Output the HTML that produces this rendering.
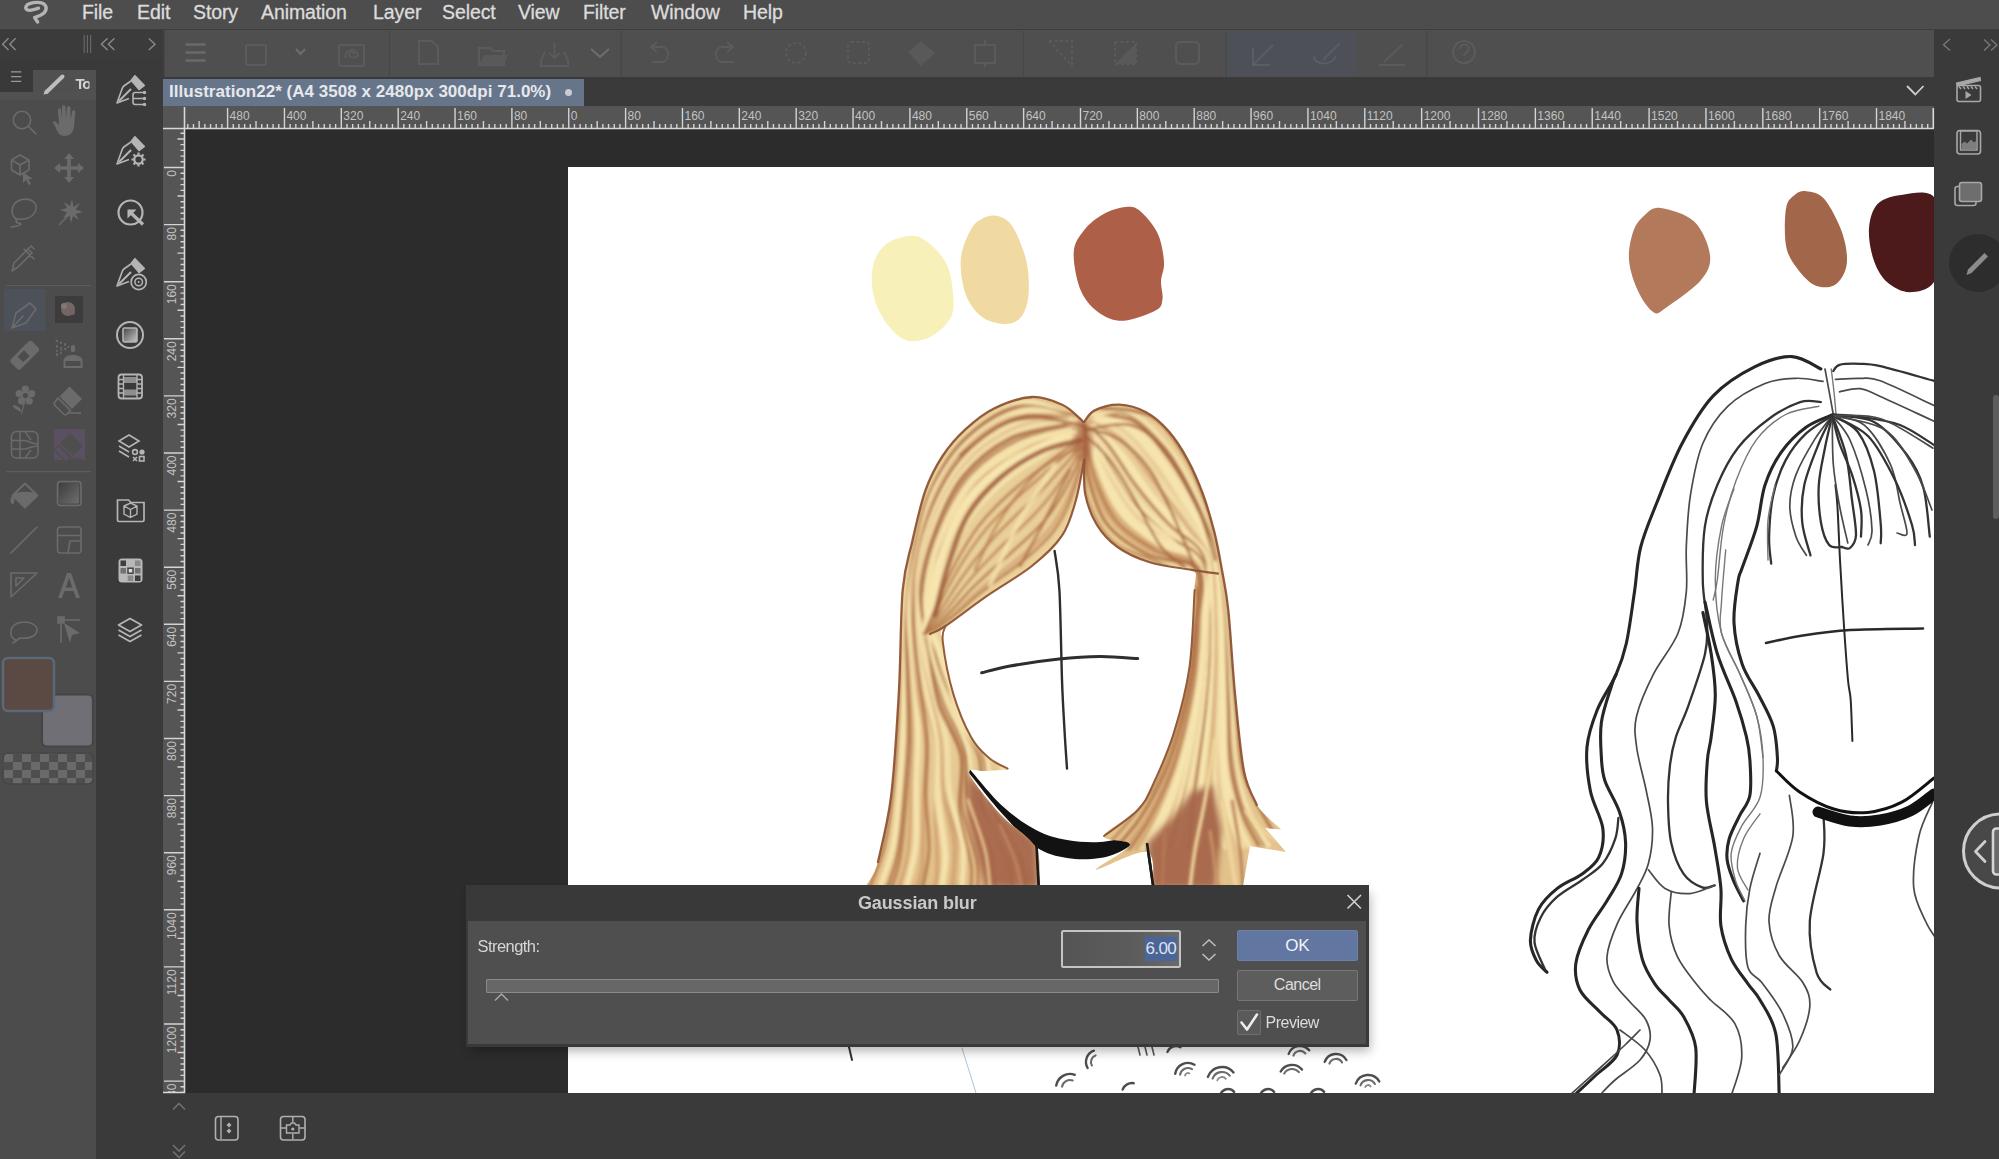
<!DOCTYPE html>
<html><head><meta charset="utf-8">
<style>
*{margin:0;padding:0;box-sizing:border-box}
html,body{width:1999px;height:1159px;overflow:hidden;background:#2c2c2c;font-family:"Liberation Sans",sans-serif}
.a{position:absolute}
svg{position:absolute;left:0;top:0}
#menu span{position:absolute;top:1px;letter-spacing:-0.1px;color:#dcdcdc;font-size:19.5px;-webkit-text-stroke:0.3px #dcdcdc}
</style></head><body>
<div class="a" style="left:0;top:0;width:1999px;height:29px;background:#4d4d4d"></div>
<div class="a" style="left:0;top:29px;width:1999px;height:1px;background:#3e3e3e"></div>
<div id="menu">
<span style="left:82px">File</span>
<span style="left:137px">Edit</span>
<span style="left:193px">Story</span>
<span style="left:261px">Animation</span>
<span style="left:373px">Layer</span>
<span style="left:442px">Select</span>
<span style="left:518px">View</span>
<span style="left:583px">Filter</span>
<span style="left:651px">Window</span>
<span style="left:743px">Help</span>
</div>
<!-- left header -->
<div class="a" style="left:0;top:30px;width:163px;height:30px;background:#3b3b3b"></div>
<!-- tool panel -->
<div class="a" style="left:0;top:60px;width:96px;height:1099px;background:#4c4c4c"></div>
<div class="a" style="left:0;top:60px;width:96px;height:10px;background:#393939"></div>
<div class="a" style="left:0;top:70px;width:33px;height:22px;background:#393939"></div>
<div class="a" style="left:33px;top:70px;width:63px;height:22px;background:#505050"></div>
<div class="a" style="left:0;top:92px;width:96px;height:8px;background:#515151"></div>
<!-- subtool column -->
<div class="a" style="left:96px;top:60px;width:67px;height:1099px;background:#3a3a3a"></div>
<!-- toolbar -->
<div class="a" style="left:163px;top:30px;width:1771px;height:47px;background:#4f4f4f"></div>
<div class="a" style="left:1226px;top:31px;width:131px;height:45px;background:#4d5056"></div>
<!-- tab row -->
<div class="a" style="left:163px;top:77px;width:1771px;height:29px;background:#3a3a3a"></div>
<div class="a" style="left:163px;top:79px;width:421px;height:27px;background:#66758a"></div>
<div class="a" style="left:169px;top:81.5px;color:#e6e8ec;font-size:17px;font-weight:bold;white-space:nowrap;letter-spacing:0.03px">Illustration22* (A4 3508 x 2480px 300dpi 71.0%)</div>
<div class="a" style="left:565px;top:89px;width:7px;height:7px;border-radius:50%;background:#c8ccd4"></div>
<!-- rulers bg -->
<div class="a" style="left:163px;top:106px;width:1771px;height:22px;background:#555"></div>
<div class="a" style="left:163px;top:128px;width:22px;height:965px;background:#555"></div>
<!-- canvas paper -->
<div class="a" style="left:568px;top:167px;width:1366px;height:926px;background:#fff"></div>
<!-- bottom bar -->
<div class="a" style="left:163px;top:1093px;width:1771px;height:66px;background:#3a3a3a"></div>
<!-- right panel -->
<div class="a" style="left:1934px;top:30px;width:65px;height:1129px;background:#3a3a3a"></div>

<svg width="1999" height="1159">
<defs><clipPath id="vrc"><rect x="163" y="129" width="23" height="964"/></clipPath><clipPath id="hrc"><rect x="185" y="106" width="1749" height="23"/></clipPath></defs>
<g font-size="12" fill="#c2c2c2" clip-path="url(#hrc)"><path stroke="#d4d4d4" stroke-width="1.4" fill="none" d="M187.79 124V128 M193.47 124V128 M199.16 121V128 M204.85 124V128 M210.53 124V128 M216.22 124V128 M221.90 124V128 M227.59 108V128 M233.28 124V128 M238.96 124V128 M244.65 124V128 M250.33 124V128 M256.02 121V128 M261.71 124V128 M267.39 124V128 M273.08 124V128 M278.76 124V128 M284.45 108V128 M290.14 124V128 M295.82 124V128 M301.51 124V128 M307.19 124V128 M312.88 121V128 M318.57 124V128 M324.25 124V128 M329.94 124V128 M335.62 124V128 M341.31 108V128 M347.00 124V128 M352.68 124V128 M358.37 124V128 M364.05 124V128 M369.74 121V128 M375.43 124V128 M381.11 124V128 M386.80 124V128 M392.48 124V128 M398.17 108V128 M403.86 124V128 M409.54 124V128 M415.23 124V128 M420.91 124V128 M426.60 121V128 M432.29 124V128 M437.97 124V128 M443.66 124V128 M449.34 124V128 M455.03 108V128 M460.72 124V128 M466.40 124V128 M472.09 124V128 M477.77 124V128 M483.46 121V128 M489.15 124V128 M494.83 124V128 M500.52 124V128 M506.20 124V128 M511.89 108V128 M517.58 124V128 M523.26 124V128 M528.95 124V128 M534.63 124V128 M540.32 121V128 M546.01 124V128 M551.69 124V128 M557.38 124V128 M563.06 124V128 M568.75 108V128 M574.44 124V128 M580.12 124V128 M585.81 124V128 M591.49 124V128 M597.18 121V128 M602.87 124V128 M608.55 124V128 M614.24 124V128 M619.92 124V128 M625.61 108V128 M631.30 124V128 M636.98 124V128 M642.67 124V128 M648.35 124V128 M654.04 121V128 M659.73 124V128 M665.41 124V128 M671.10 124V128 M676.78 124V128 M682.47 108V128 M688.16 124V128 M693.84 124V128 M699.53 124V128 M705.21 124V128 M710.90 121V128 M716.59 124V128 M722.27 124V128 M727.96 124V128 M733.64 124V128 M739.33 108V128 M745.02 124V128 M750.70 124V128 M756.39 124V128 M762.07 124V128 M767.76 121V128 M773.45 124V128 M779.13 124V128 M784.82 124V128 M790.50 124V128 M796.19 108V128 M801.88 124V128 M807.56 124V128 M813.25 124V128 M818.93 124V128 M824.62 121V128 M830.31 124V128 M835.99 124V128 M841.68 124V128 M847.36 124V128 M853.05 108V128 M858.74 124V128 M864.42 124V128 M870.11 124V128 M875.79 124V128 M881.48 121V128 M887.17 124V128 M892.85 124V128 M898.54 124V128 M904.22 124V128 M909.91 108V128 M915.60 124V128 M921.28 124V128 M926.97 124V128 M932.65 124V128 M938.34 121V128 M944.03 124V128 M949.71 124V128 M955.40 124V128 M961.08 124V128 M966.77 108V128 M972.46 124V128 M978.14 124V128 M983.83 124V128 M989.51 124V128 M995.20 121V128 M1000.89 124V128 M1006.57 124V128 M1012.26 124V128 M1017.94 124V128 M1023.63 108V128 M1029.32 124V128 M1035.00 124V128 M1040.69 124V128 M1046.37 124V128 M1052.06 121V128 M1057.75 124V128 M1063.43 124V128 M1069.12 124V128 M1074.80 124V128 M1080.49 108V128 M1086.18 124V128 M1091.86 124V128 M1097.55 124V128 M1103.23 124V128 M1108.92 121V128 M1114.61 124V128 M1120.29 124V128 M1125.98 124V128 M1131.66 124V128 M1137.35 108V128 M1143.04 124V128 M1148.72 124V128 M1154.41 124V128 M1160.09 124V128 M1165.78 121V128 M1171.47 124V128 M1177.15 124V128 M1182.84 124V128 M1188.52 124V128 M1194.21 108V128 M1199.90 124V128 M1205.58 124V128 M1211.27 124V128 M1216.95 124V128 M1222.64 121V128 M1228.33 124V128 M1234.01 124V128 M1239.70 124V128 M1245.38 124V128 M1251.07 108V128 M1256.76 124V128 M1262.44 124V128 M1268.13 124V128 M1273.81 124V128 M1279.50 121V128 M1285.19 124V128 M1290.87 124V128 M1296.56 124V128 M1302.24 124V128 M1307.93 108V128 M1313.62 124V128 M1319.30 124V128 M1324.99 124V128 M1330.67 124V128 M1336.36 121V128 M1342.05 124V128 M1347.73 124V128 M1353.42 124V128 M1359.10 124V128 M1364.79 108V128 M1370.48 124V128 M1376.16 124V128 M1381.85 124V128 M1387.53 124V128 M1393.22 121V128 M1398.91 124V128 M1404.59 124V128 M1410.28 124V128 M1415.96 124V128 M1421.65 108V128 M1427.34 124V128 M1433.02 124V128 M1438.71 124V128 M1444.39 124V128 M1450.08 121V128 M1455.77 124V128 M1461.45 124V128 M1467.14 124V128 M1472.82 124V128 M1478.51 108V128 M1484.20 124V128 M1489.88 124V128 M1495.57 124V128 M1501.25 124V128 M1506.94 121V128 M1512.63 124V128 M1518.31 124V128 M1524.00 124V128 M1529.68 124V128 M1535.37 108V128 M1541.06 124V128 M1546.74 124V128 M1552.43 124V128 M1558.11 124V128 M1563.80 121V128 M1569.49 124V128 M1575.17 124V128 M1580.86 124V128 M1586.54 124V128 M1592.23 108V128 M1597.92 124V128 M1603.60 124V128 M1609.29 124V128 M1614.97 124V128 M1620.66 121V128 M1626.35 124V128 M1632.03 124V128 M1637.72 124V128 M1643.40 124V128 M1649.09 108V128 M1654.78 124V128 M1660.46 124V128 M1666.15 124V128 M1671.83 124V128 M1677.52 121V128 M1683.21 124V128 M1688.89 124V128 M1694.58 124V128 M1700.26 124V128 M1705.95 108V128 M1711.64 124V128 M1717.32 124V128 M1723.01 124V128 M1728.69 124V128 M1734.38 121V128 M1740.07 124V128 M1745.75 124V128 M1751.44 124V128 M1757.12 124V128 M1762.81 108V128 M1768.50 124V128 M1774.18 124V128 M1779.87 124V128 M1785.55 124V128 M1791.24 121V128 M1796.93 124V128 M1802.61 124V128 M1808.30 124V128 M1813.98 124V128 M1819.67 108V128 M1825.36 124V128 M1831.04 124V128 M1836.73 124V128 M1842.41 124V128 M1848.10 121V128 M1853.79 124V128 M1859.47 124V128 M1865.16 124V128 M1870.84 124V128 M1876.53 108V128 M1882.22 124V128 M1887.90 124V128 M1893.59 124V128 M1899.27 124V128 M1904.96 121V128 M1910.65 124V128 M1916.33 124V128 M1922.02 124V128 M1927.70 124V128"/>
<text x="229.59" y="119.8">480</text>
<text x="286.45" y="119.8">400</text>
<text x="343.31" y="119.8">320</text>
<text x="400.17" y="119.8">240</text>
<text x="457.03" y="119.8">160</text>
<text x="513.89" y="119.8">80</text>
<text x="570.75" y="119.8">0</text>
<text x="627.61" y="119.8">80</text>
<text x="684.47" y="119.8">160</text>
<text x="741.33" y="119.8">240</text>
<text x="798.19" y="119.8">320</text>
<text x="855.05" y="119.8">400</text>
<text x="911.91" y="119.8">480</text>
<text x="968.77" y="119.8">560</text>
<text x="1025.63" y="119.8">640</text>
<text x="1082.49" y="119.8">720</text>
<text x="1139.35" y="119.8">800</text>
<text x="1196.21" y="119.8">880</text>
<text x="1253.07" y="119.8">960</text>
<text x="1309.93" y="119.8">1040</text>
<text x="1366.79" y="119.8">1120</text>
<text x="1423.65" y="119.8">1200</text>
<text x="1480.51" y="119.8">1280</text>
<text x="1537.37" y="119.8">1360</text>
<text x="1594.23" y="119.8">1440</text>
<text x="1651.09" y="119.8">1520</text>
<text x="1707.95" y="119.8">1600</text>
<text x="1764.81" y="119.8">1680</text>
<text x="1821.67" y="119.8">1760</text>
<text x="1878.53" y="119.8">1840</text></g>
<g font-size="12" fill="#c2c2c2" clip-path="url(#vrc)"><path stroke="#d4d4d4" stroke-width="1.4" fill="none" d="M180.5 133.24H185 M177.5 138.95H185 M180.5 144.66H185 M180.5 150.37H185 M180.5 156.08H185 M180.5 161.79H185 M164 167.50H185 M180.5 173.21H185 M180.5 178.92H185 M180.5 184.63H185 M180.5 190.34H185 M177.5 196.05H185 M180.5 201.76H185 M180.5 207.47H185 M180.5 213.18H185 M180.5 218.89H185 M164 224.60H185 M180.5 230.31H185 M180.5 236.02H185 M180.5 241.73H185 M180.5 247.44H185 M177.5 253.15H185 M180.5 258.86H185 M180.5 264.57H185 M180.5 270.28H185 M180.5 275.99H185 M164 281.70H185 M180.5 287.41H185 M180.5 293.12H185 M180.5 298.83H185 M180.5 304.54H185 M177.5 310.25H185 M180.5 315.96H185 M180.5 321.67H185 M180.5 327.38H185 M180.5 333.09H185 M164 338.80H185 M180.5 344.51H185 M180.5 350.22H185 M180.5 355.93H185 M180.5 361.64H185 M177.5 367.35H185 M180.5 373.06H185 M180.5 378.77H185 M180.5 384.48H185 M180.5 390.19H185 M164 395.90H185 M180.5 401.61H185 M180.5 407.32H185 M180.5 413.03H185 M180.5 418.74H185 M177.5 424.45H185 M180.5 430.16H185 M180.5 435.87H185 M180.5 441.58H185 M180.5 447.29H185 M164 453.00H185 M180.5 458.71H185 M180.5 464.42H185 M180.5 470.13H185 M180.5 475.84H185 M177.5 481.55H185 M180.5 487.26H185 M180.5 492.97H185 M180.5 498.68H185 M180.5 504.39H185 M164 510.10H185 M180.5 515.81H185 M180.5 521.52H185 M180.5 527.23H185 M180.5 532.94H185 M177.5 538.65H185 M180.5 544.36H185 M180.5 550.07H185 M180.5 555.78H185 M180.5 561.49H185 M164 567.20H185 M180.5 572.91H185 M180.5 578.62H185 M180.5 584.33H185 M180.5 590.04H185 M177.5 595.75H185 M180.5 601.46H185 M180.5 607.17H185 M180.5 612.88H185 M180.5 618.59H185 M164 624.30H185 M180.5 630.01H185 M180.5 635.72H185 M180.5 641.43H185 M180.5 647.14H185 M177.5 652.85H185 M180.5 658.56H185 M180.5 664.27H185 M180.5 669.98H185 M180.5 675.69H185 M164 681.40H185 M180.5 687.11H185 M180.5 692.82H185 M180.5 698.53H185 M180.5 704.24H185 M177.5 709.95H185 M180.5 715.66H185 M180.5 721.37H185 M180.5 727.08H185 M180.5 732.79H185 M164 738.50H185 M180.5 744.21H185 M180.5 749.92H185 M180.5 755.63H185 M180.5 761.34H185 M177.5 767.05H185 M180.5 772.76H185 M180.5 778.47H185 M180.5 784.18H185 M180.5 789.89H185 M164 795.60H185 M180.5 801.31H185 M180.5 807.02H185 M180.5 812.73H185 M180.5 818.44H185 M177.5 824.15H185 M180.5 829.86H185 M180.5 835.57H185 M180.5 841.28H185 M180.5 846.99H185 M164 852.70H185 M180.5 858.41H185 M180.5 864.12H185 M180.5 869.83H185 M180.5 875.54H185 M177.5 881.25H185 M180.5 886.96H185 M180.5 892.67H185 M180.5 898.38H185 M180.5 904.09H185 M164 909.80H185 M180.5 915.51H185 M180.5 921.22H185 M180.5 926.93H185 M180.5 932.64H185 M177.5 938.35H185 M180.5 944.06H185 M180.5 949.77H185 M180.5 955.48H185 M180.5 961.19H185 M164 966.90H185 M180.5 972.61H185 M180.5 978.32H185 M180.5 984.03H185 M180.5 989.74H185 M177.5 995.45H185 M180.5 1001.16H185 M180.5 1006.87H185 M180.5 1012.58H185 M180.5 1018.29H185 M164 1024.00H185 M180.5 1029.71H185 M180.5 1035.42H185 M180.5 1041.13H185 M180.5 1046.84H185 M177.5 1052.55H185 M180.5 1058.26H185 M180.5 1063.97H185 M180.5 1069.68H185 M180.5 1075.39H185 M164 1081.10H185 M180.5 1086.81H185 M180.5 1092.52H185"/>
<text transform="translate(176 170.00) rotate(-90)" text-anchor="end">0</text>
<text transform="translate(176 227.10) rotate(-90)" text-anchor="end">80</text>
<text transform="translate(176 284.20) rotate(-90)" text-anchor="end">160</text>
<text transform="translate(176 341.30) rotate(-90)" text-anchor="end">240</text>
<text transform="translate(176 398.40) rotate(-90)" text-anchor="end">320</text>
<text transform="translate(176 455.50) rotate(-90)" text-anchor="end">400</text>
<text transform="translate(176 512.60) rotate(-90)" text-anchor="end">480</text>
<text transform="translate(176 569.70) rotate(-90)" text-anchor="end">560</text>
<text transform="translate(176 626.80) rotate(-90)" text-anchor="end">640</text>
<text transform="translate(176 683.90) rotate(-90)" text-anchor="end">720</text>
<text transform="translate(176 741.00) rotate(-90)" text-anchor="end">800</text>
<text transform="translate(176 798.10) rotate(-90)" text-anchor="end">880</text>
<text transform="translate(176 855.20) rotate(-90)" text-anchor="end">960</text>
<text transform="translate(176 912.30) rotate(-90)" text-anchor="end">1040</text>
<text transform="translate(176 969.40) rotate(-90)" text-anchor="end">1120</text>
<text transform="translate(176 1026.50) rotate(-90)" text-anchor="end">1200</text>
<text transform="translate(176 1083.60) rotate(-90)" text-anchor="end">1280</text></g>
<path d="M163 128.5H1934 M184.5 107V1093 M1933.3 108V128 M163 1092.5H185" stroke="#d8d8d8" stroke-width="1.6"/>
</svg>
<svg width="1999" height="1159" style="z-index:2"><svg x="568" y="167" width="1366" height="926" viewBox="568 167 1366 926" overflow="hidden"><path d="M911.2 235.8 C918.4 235.5 922.9 238.3 928.8 243.0 C934.7 247.7 942.4 255.8 946.4 263.8 C950.4 271.8 952.0 282.2 952.8 291.0 C953.6 299.8 954.7 309.2 951.2 316.7 C947.7 324.2 939.2 331.9 932.0 335.9 C924.8 339.9 915.2 342.3 908.0 340.7 C900.8 339.1 894.4 333.2 888.8 326.3 C883.2 319.4 877.1 308.9 874.4 299.0 C871.7 289.1 870.9 276.1 872.8 267.0 C874.7 257.9 879.2 249.8 885.6 244.6 C892.0 239.4 904.0 236.1 911.2 235.8 Z" fill="#f7f1b9"/>
<path d="M996.0 215.8 C1000.8 216.6 1006.2 218.7 1010.5 223.8 C1014.8 228.9 1018.8 238.5 1021.7 246.2 C1024.6 253.9 1027.0 261.4 1028.0 270.2 C1029.0 279.0 1029.3 291.0 1028.0 299.0 C1026.7 307.0 1024.0 314.2 1020.0 318.3 C1016.0 322.4 1010.4 324.2 1004.0 323.9 C997.6 323.6 988.1 321.6 981.7 316.7 C975.3 311.8 969.2 303.8 965.7 294.2 C962.2 284.6 960.0 269.7 960.8 259.0 C961.6 248.3 967.0 236.9 970.5 230.2 C974.0 223.5 977.5 221.4 981.7 219.0 C986.0 216.6 991.2 215.0 996.0 215.8 Z" fill="#f0daa1"/>
<path d="M1125.7 207.0 C1131.8 206.5 1134.8 206.6 1140.1 211.0 C1145.4 215.4 1153.7 224.9 1157.7 233.4 C1161.7 241.9 1163.5 254.2 1164.0 262.2 C1164.5 270.2 1161.2 275.3 1161.0 281.4 C1160.8 287.5 1163.3 294.2 1162.5 299.0 C1161.7 303.8 1162.4 306.7 1156.0 310.3 C1149.6 313.9 1133.3 320.2 1124.0 320.7 C1114.7 321.2 1107.2 318.4 1100.0 313.5 C1092.8 308.6 1085.4 301.1 1081.0 291.0 C1076.6 280.9 1073.2 262.7 1073.7 252.6 C1074.2 242.5 1079.1 236.6 1084.0 230.2 C1088.9 223.8 1096.3 218.1 1103.3 214.2 C1110.2 210.3 1119.6 207.5 1125.7 207.0 Z" fill="#ad5f48"/>
<path d="M1660.5 208.0 C1668.7 209.1 1686.0 213.7 1694.2 221.6 C1702.5 229.5 1708.9 245.5 1710.0 255.2 C1711.1 264.9 1708.1 271.4 1701.0 280.0 C1693.9 288.6 1675.2 301.4 1667.3 306.8 C1659.4 312.2 1658.7 315.0 1653.8 312.4 C1648.9 309.8 1642.1 299.8 1638.0 291.0 C1633.9 282.2 1629.7 269.8 1629.0 259.7 C1628.3 249.6 1630.9 238.1 1633.6 230.6 C1636.2 223.1 1640.4 218.7 1644.9 214.9 C1649.4 211.1 1652.3 206.9 1660.5 208.0 Z" fill="#b27a5b"/>
<path d="M1806.3 191.3 C1811.2 192.0 1818.3 192.1 1824.3 199.0 C1830.3 205.9 1838.5 221.9 1842.2 232.8 C1845.9 243.7 1847.8 255.6 1846.7 264.2 C1845.6 272.8 1840.7 280.8 1835.5 284.4 C1830.3 287.9 1821.6 288.1 1815.3 285.5 C1809.0 282.9 1802.3 275.2 1797.4 268.7 C1792.5 262.1 1788.0 256.3 1786.1 246.2 C1784.2 236.1 1784.6 216.7 1786.1 208.1 C1787.6 199.5 1791.6 197.5 1795.0 194.7 C1798.4 191.9 1801.4 190.6 1806.3 191.3 Z" fill="#a2674a"/>
<path d="M1902.8 194.7 C1912.1 193.6 1927.0 189.4 1934.0 197.0 C1941.0 204.6 1945.0 225.8 1945.0 240.0 C1945.0 254.2 1939.9 273.3 1934.0 282.0 C1928.1 290.7 1917.3 292.2 1909.5 292.2 C1901.7 292.2 1893.0 287.4 1887.0 282.0 C1881.0 276.6 1876.6 268.6 1873.6 259.7 C1870.6 250.8 1868.3 237.7 1869.0 228.3 C1869.7 219.0 1872.4 209.2 1878.0 203.6 C1883.6 198.0 1893.5 195.8 1902.8 194.7 Z" fill="#4d1a1c"/>
<g fill="none" stroke="#2e2e2e" stroke-linecap="round">
<path d="M1054.6 551.0 C1055.4 557.5 1058.2 568.5 1059.4 590.0 C1060.6 611.5 1061.2 656.7 1062.0 680.0 C1062.8 703.3 1063.7 715.2 1064.5 730.0 C1065.3 744.8 1066.6 762.2 1067.0 768.6" stroke-width="2.4"/>
<path d="M981.7 672.8 C986.4 671.7 997.1 668.3 1010.0 666.0 C1022.9 663.7 1044.0 660.6 1059.0 659.0 C1074.0 657.4 1086.9 656.6 1100.0 656.5 C1113.1 656.4 1131.4 658.2 1137.7 658.6" stroke-width="3"/>
</g>
<defs><clipPath id="hc"><path d="M866 886 C868.0 882.0 873.8 876.8 878.0 862.0 C882.2 847.2 887.5 825.1 891.0 797.0 C894.5 768.9 896.8 728.1 898.8 693.6 C900.8 659.1 900.5 615.4 902.7 590.0 C905.0 564.6 908.5 558.1 912.3 541.4 C916.1 524.7 920.5 504.2 925.6 490.0 C930.7 475.8 936.0 466.1 942.6 456.0 C949.2 445.9 956.8 437.3 965.4 429.4 C974.0 421.5 982.9 413.9 994.0 408.5 C1005.1 403.1 1020.5 397.6 1031.9 397.0 C1043.3 396.4 1054.3 401.2 1062.2 404.7 C1070.1 408.2 1075.8 415.1 1079.3 418.0 C1082.8 420.9 1082.8 421.3 1083.5 422.0 C1085.4 420.1 1088.7 413.3 1094.7 410.4 C1100.7 407.5 1110.9 404.4 1119.4 404.7 C1128.0 405.0 1137.8 407.9 1146.0 412.3 C1154.2 416.7 1161.8 423.4 1168.7 431.3 C1175.7 439.2 1182.0 449.2 1187.7 459.7 C1193.4 470.1 1198.5 482.0 1202.9 494.0 C1207.3 506.0 1211.1 519.3 1214.3 531.9 C1217.5 544.5 1219.6 556.8 1221.9 569.8 C1224.2 582.8 1226.1 589.4 1228.3 610.0 C1230.5 630.6 1232.4 666.7 1235.0 693.6 C1237.6 720.5 1240.4 752.6 1244.0 771.2 C1247.6 789.8 1250.6 795.3 1256.8 805.0 C1263.0 814.7 1277.0 825.4 1281.0 829.5 L1265 828 L1286 852 L1250 846 L1243 886 L1153.2 886 C1152.2 880.3 1156.5 854.7 1147.0 852.0 C1137.5 849.3 1099.0 870.8 1096.2 869.6 C1093.4 868.4 1128.7 850.6 1130.0 845.0 C1131.3 839.4 1102.7 841.8 1104.0 836.0 C1105.3 830.2 1129.5 818.6 1137.7 810.0 C1145.9 801.4 1147.2 797.1 1153.2 784.2 C1159.2 771.3 1168.0 751.8 1174.0 732.4 C1180.0 713.0 1186.0 691.4 1189.4 667.7 C1192.8 644.0 1194.2 606.3 1194.6 590.0 C1194.9 573.7 1199.0 574.4 1191.5 569.8 C1184.0 565.2 1162.0 566.0 1149.7 562.2 C1137.4 558.4 1126.3 553.3 1117.5 547.0 C1108.7 540.7 1102.0 533.1 1096.6 524.3 C1091.2 515.5 1087.3 504.8 1085.2 494.0 C1083.1 483.2 1084.4 465.4 1084.2 459.7 C1082.8 466.7 1079.2 488.8 1075.5 501.5 C1071.8 514.2 1066.1 527.5 1062.0 535.7 C1057.9 544.0 1055.8 546.0 1050.8 551.0 C1045.8 556.0 1039.8 560.3 1031.9 566.0 C1024.0 571.7 1011.0 579.9 1003.4 585.0 C995.8 590.1 996.0 589.6 986.3 596.4 C976.6 603.2 952.6 618.4 945.4 626.0 C938.1 633.6 941.5 630.5 942.8 641.8 C944.1 653.1 948.5 677.6 953.2 693.6 C958.0 709.6 965.3 726.8 971.3 737.6 C977.3 748.4 983.3 753.1 989.4 758.3 C995.5 763.5 1008.3 766.5 1007.6 768.6 C1006.9 770.7 991.4 770.3 985.0 771.0 C978.6 771.7 966.5 765.8 969.0 773.0 C971.5 780.2 988.8 801.5 1000.0 814.0 C1011.2 826.5 1029.6 836.0 1036.0 848.0 C1042.4 860.0 1038.2 879.7 1038.6 886.0 Z"/></clipPath>
<filter id="bl1" x="-10%" y="-10%" width="120%" height="120%"><feGaussianBlur stdDeviation="1.6"/></filter>
<filter id="bl05" x="-10%" y="-10%" width="120%" height="120%"><feGaussianBlur stdDeviation="0.6"/></filter>
<filter id="bl2" x="-10%" y="-10%" width="120%" height="120%"><feGaussianBlur stdDeviation="3"/></filter>
<linearGradient id="hg" x1="0" y1="0" x2="0" y2="1"><stop offset="0" stop-color="#e8cb94"/><stop offset="0.5" stop-color="#ebd39c"/><stop offset="1" stop-color="#e2c08a"/></linearGradient>
</defs>
<path d="M970.0 769.5 C975.4 775.6 991.4 795.9 1002.4 806.0 C1013.4 816.1 1025.2 824.3 1036.0 830.0 C1046.8 835.7 1056.3 838.0 1067.0 840.0 C1077.7 842.0 1090.3 842.5 1100.0 842.0 C1109.7 841.5 1116.7 839.2 1125.0 837.0 C1133.3 834.8 1145.8 830.3 1150.0 829.0 C1145.8 832.3 1133.3 844.2 1125.0 849.0 C1116.7 853.8 1109.7 856.5 1100.0 858.0 C1090.3 859.5 1077.7 859.8 1067.0 858.0 C1056.3 856.2 1046.8 854.3 1036.0 847.0 C1025.2 839.7 1013.6 826.3 1002.4 814.0 C991.2 801.7 974.6 779.8 969.0 773.0 Z" fill="#121212"/>
<path d="M1036.5 845 L1038.6 886 M1147 843 L1153.2 886" stroke="#1a1a1a" stroke-width="2.6" fill="none"/>
<path d="M866 886 C868.0 882.0 873.8 876.8 878.0 862.0 C882.2 847.2 887.5 825.1 891.0 797.0 C894.5 768.9 896.8 728.1 898.8 693.6 C900.8 659.1 900.5 615.4 902.7 590.0 C905.0 564.6 908.5 558.1 912.3 541.4 C916.1 524.7 920.5 504.2 925.6 490.0 C930.7 475.8 936.0 466.1 942.6 456.0 C949.2 445.9 956.8 437.3 965.4 429.4 C974.0 421.5 982.9 413.9 994.0 408.5 C1005.1 403.1 1020.5 397.6 1031.9 397.0 C1043.3 396.4 1054.3 401.2 1062.2 404.7 C1070.1 408.2 1075.8 415.1 1079.3 418.0 C1082.8 420.9 1082.8 421.3 1083.5 422.0 C1085.4 420.1 1088.7 413.3 1094.7 410.4 C1100.7 407.5 1110.9 404.4 1119.4 404.7 C1128.0 405.0 1137.8 407.9 1146.0 412.3 C1154.2 416.7 1161.8 423.4 1168.7 431.3 C1175.7 439.2 1182.0 449.2 1187.7 459.7 C1193.4 470.1 1198.5 482.0 1202.9 494.0 C1207.3 506.0 1211.1 519.3 1214.3 531.9 C1217.5 544.5 1219.6 556.8 1221.9 569.8 C1224.2 582.8 1226.1 589.4 1228.3 610.0 C1230.5 630.6 1232.4 666.7 1235.0 693.6 C1237.6 720.5 1240.4 752.6 1244.0 771.2 C1247.6 789.8 1250.6 795.3 1256.8 805.0 C1263.0 814.7 1277.0 825.4 1281.0 829.5 L1265 828 L1286 852 L1250 846 L1243 886 L1153.2 886 C1152.2 880.3 1156.5 854.7 1147.0 852.0 C1137.5 849.3 1099.0 870.8 1096.2 869.6 C1093.4 868.4 1128.7 850.6 1130.0 845.0 C1131.3 839.4 1102.7 841.8 1104.0 836.0 C1105.3 830.2 1129.5 818.6 1137.7 810.0 C1145.9 801.4 1147.2 797.1 1153.2 784.2 C1159.2 771.3 1168.0 751.8 1174.0 732.4 C1180.0 713.0 1186.0 691.4 1189.4 667.7 C1192.8 644.0 1194.2 606.3 1194.6 590.0 C1194.9 573.7 1199.0 574.4 1191.5 569.8 C1184.0 565.2 1162.0 566.0 1149.7 562.2 C1137.4 558.4 1126.3 553.3 1117.5 547.0 C1108.7 540.7 1102.0 533.1 1096.6 524.3 C1091.2 515.5 1087.3 504.8 1085.2 494.0 C1083.1 483.2 1084.4 465.4 1084.2 459.7 C1082.8 466.7 1079.2 488.8 1075.5 501.5 C1071.8 514.2 1066.1 527.5 1062.0 535.7 C1057.9 544.0 1055.8 546.0 1050.8 551.0 C1045.8 556.0 1039.8 560.3 1031.9 566.0 C1024.0 571.7 1011.0 579.9 1003.4 585.0 C995.8 590.1 996.0 589.6 986.3 596.4 C976.6 603.2 952.6 618.4 945.4 626.0 C938.1 633.6 941.5 630.5 942.8 641.8 C944.1 653.1 948.5 677.6 953.2 693.6 C958.0 709.6 965.3 726.8 971.3 737.6 C977.3 748.4 983.3 753.1 989.4 758.3 C995.5 763.5 1008.3 766.5 1007.6 768.6 C1006.9 770.7 991.4 770.3 985.0 771.0 C978.6 771.7 966.5 765.8 969.0 773.0 C971.5 780.2 988.8 801.5 1000.0 814.0 C1011.2 826.5 1029.6 836.0 1036.0 848.0 C1042.4 860.0 1038.2 879.7 1038.6 886.0 Z" fill="url(#hg)"/>
<g clip-path="url(#hc)">
<g fill="none" stroke-linecap="round" filter="url(#bl1)">
<path d="M1083.0 422.1 C1073.8 418.1 1046.3 397.8 1027.7 398.2 C1009.1 398.7 987.4 412.2 971.6 424.9 C955.8 437.5 942.4 455.9 932.9 474.1 C923.4 492.3 919.4 513.8 914.4 534.1 C909.4 554.4 905.0 575.1 902.8 595.8 C900.5 616.6 901.7 637.8 901.0 658.7 C900.3 679.7 899.7 700.6 898.5 721.5 C897.3 742.4 896.3 763.3 894.0 784.1 C891.6 804.8 889.2 826.7 884.3 846.1 C879.4 865.4 867.9 891.0 864.6 900.0" stroke="#a9683f" stroke-width="2.6" opacity="0.83"/>
<path d="M1083.0 422.5 C1073.8 419.0 1046.2 400.5 1027.7 401.5 C1009.2 402.5 987.7 415.9 972.0 428.6 C956.4 441.3 943.3 459.7 933.8 477.9 C924.4 496.1 920.3 517.6 915.4 537.8 C910.6 558.0 906.4 578.5 904.6 599.1 C902.8 619.7 904.5 640.7 904.4 661.4 C904.3 682.2 904.5 703.0 903.8 723.5 C903.1 744.1 901.9 764.5 900.1 784.9 C898.3 805.3 897.2 826.9 893.1 846.1 C889.0 865.3 878.3 891.0 875.4 900.0" stroke="#f7e6af" stroke-width="5.8" opacity="0.90"/>
<path d="M1075.4 416.5 C1065.8 414.8 1036.1 402.5 1017.6 406.1 C999.2 409.7 979.3 424.2 964.7 438.2 C950.1 452.2 938.8 471.3 930.3 490.0 C921.8 508.7 917.8 530.1 913.8 550.4 C909.8 570.6 907.3 590.8 906.1 611.4 C905.0 631.9 906.5 653.0 906.8 673.6 C907.1 694.2 908.2 714.5 907.7 734.9 C907.2 755.2 905.4 775.6 903.7 795.8 C901.9 816.0 900.5 838.8 897.0 856.2 C893.5 873.6 884.9 892.7 882.5 900.0" stroke="#a9683f" stroke-width="3.0" opacity="0.73"/>
<path d="M1071.4 414.1 C1061.6 413.3 1031.1 404.2 1012.7 409.1 C994.4 414.0 975.2 428.8 961.2 443.4 C947.2 457.9 936.8 477.4 928.8 496.3 C920.8 515.3 916.6 536.6 913.0 556.9 C909.4 577.1 908.0 597.2 907.2 617.7 C906.5 638.2 907.8 659.4 908.3 679.8 C908.9 700.2 910.7 720.1 910.4 740.3 C910.0 760.5 907.9 780.9 906.1 801.1 C904.3 821.3 902.8 844.8 899.5 861.2 C896.3 877.7 888.9 893.5 886.7 900.0" stroke="#a9683f" stroke-width="2.8" opacity="0.74"/>
<path d="M1075.3 417.7 C1065.7 416.4 1036.1 405.9 1017.8 410.0 C999.4 414.1 979.7 428.4 965.3 442.4 C950.9 456.5 939.8 475.6 931.4 494.3 C923.0 512.9 918.8 534.4 915.0 554.5 C911.2 574.6 909.4 594.5 908.8 614.8 C908.1 635.2 910.0 656.2 910.9 676.6 C911.8 696.9 914.3 716.8 914.3 736.8 C914.3 756.8 912.1 776.7 911.0 796.6 C909.8 816.5 910.0 839.0 907.3 856.2 C904.6 873.4 896.8 892.7 894.7 900.0" stroke="#c99263" stroke-width="3.6" opacity="0.55"/>
<path d="M1083.0 423.4 C1073.8 421.1 1046.1 407.5 1027.8 410.0 C1009.5 412.4 988.5 425.3 973.3 438.2 C958.0 451.2 945.5 469.5 936.3 487.7 C927.1 505.8 922.6 527.1 918.1 547.1 C913.6 567.1 910.2 587.4 909.3 607.6 C908.5 627.8 911.8 648.2 913.2 668.4 C914.5 688.6 917.0 709.0 917.5 728.8 C918.0 748.6 916.3 767.5 916.0 787.1 C915.7 806.6 917.9 827.4 915.7 846.2 C913.5 865.0 905.1 891.0 903.0 900.0" stroke="#f7e6af" stroke-width="5.9" opacity="0.90"/>
<path d="M1066.7 415.9 C1057.0 416.5 1026.2 413.0 1008.3 419.8 C990.4 426.6 972.4 441.6 959.3 456.8 C946.1 471.9 937.1 491.8 929.7 510.8 C922.2 529.9 917.1 551.1 914.5 571.0 C911.9 590.9 913.4 610.2 914.0 630.3 C914.7 650.4 916.1 671.8 918.3 691.5 C920.5 711.1 926.2 728.9 927.1 748.3 C927.9 767.6 924.3 788.0 923.5 807.6 C922.7 827.3 923.9 850.8 922.3 866.2 C920.7 881.6 915.4 894.4 914.0 900.0" stroke="#c99263" stroke-width="5.3" opacity="0.55"/>
<path d="M1079.1 421.9 C1069.8 421.0 1041.1 412.1 1022.9 416.4 C1004.8 420.6 984.8 433.9 970.3 447.5 C955.7 461.2 944.3 479.9 935.7 498.3 C927.1 516.7 922.3 538.0 918.6 557.8 C914.8 577.6 913.2 597.3 913.2 617.3 C913.3 637.2 916.7 657.8 918.9 677.7 C921.2 697.5 925.6 717.2 926.7 736.5 C927.8 755.8 925.2 774.4 925.6 793.5 C925.9 812.6 929.9 833.5 928.9 851.2 C927.9 869.0 921.2 891.9 919.6 900.0" stroke="#a9683f" stroke-width="2.7" opacity="0.85"/>
<path d="M1061.8 417.8 C1052.2 419.4 1021.5 419.6 1004.0 427.8 C986.5 436.0 969.4 451.3 957.0 467.0 C944.7 482.7 936.8 502.8 929.8 522.0 C922.8 541.1 916.9 562.3 915.1 582.0 C913.3 601.7 917.2 620.5 918.9 640.3 C920.6 660.0 922.0 681.6 925.4 700.7 C928.7 719.8 937.4 736.0 939.1 754.7 C940.9 773.5 936.2 793.8 935.9 813.2 C935.6 832.5 938.0 856.6 937.3 871.1 C936.7 885.5 932.7 895.2 931.8 900.0" stroke="#c99263" stroke-width="4.4" opacity="0.55"/>
<path d="M1074.8 422.0 C1065.4 422.4 1036.1 418.3 1018.2 424.3 C1000.3 430.3 981.4 443.8 967.6 458.1 C953.8 472.4 943.6 491.5 935.6 510.1 C927.5 528.7 922.3 549.9 919.4 569.5 C916.6 589.1 917.4 607.9 918.5 627.6 C919.6 647.3 922.7 668.2 926.1 687.6 C929.5 707.0 936.7 725.5 938.6 744.2 C940.6 762.9 936.8 781.1 937.9 799.8 C939.0 818.5 945.0 839.5 945.3 856.2 C945.5 872.9 940.5 892.7 939.5 900.0" stroke="#f7e6af" stroke-width="6.4" opacity="0.90"/>
<path d="M1083.0 425.0 C1073.8 424.9 1045.9 419.6 1027.9 424.6 C1010.0 429.6 990.0 441.5 975.4 454.8 C960.8 468.2 949.3 486.6 940.5 504.7 C931.7 522.7 926.5 543.7 922.7 563.3 C918.8 582.9 916.6 602.7 917.5 622.2 C918.5 641.8 924.4 661.2 928.3 680.5 C932.3 699.7 938.6 719.4 941.1 737.8 C943.6 756.2 941.2 772.7 943.5 790.8 C945.7 808.9 953.5 828.1 954.7 846.3 C956.0 864.5 951.5 891.1 950.8 900.0" stroke="#c99263" stroke-width="4.8" opacity="0.55"/>
<path d="M1078.9 424.5 C1069.6 425.1 1041.0 422.3 1023.2 428.4 C1005.4 434.4 986.1 446.9 972.1 460.9 C958.1 474.8 947.4 493.6 939.1 511.9 C930.8 530.2 925.4 551.3 922.3 570.7 C919.2 590.2 919.1 609.1 920.7 628.6 C922.2 648.0 927.2 668.1 931.5 687.2 C935.8 706.3 943.8 725.2 946.5 743.4 C949.3 761.5 945.6 778.4 948.0 796.4 C950.3 814.3 959.1 834.0 960.8 851.3 C962.5 868.5 958.4 891.9 957.9 900.0" stroke="#a9683f" stroke-width="2.7" opacity="0.86"/>
<path d="M1083.0 425.3 C1073.8 425.7 1045.8 422.0 1028.0 427.5 C1010.1 432.9 990.3 444.7 975.8 458.1 C961.4 471.5 950.0 489.9 941.3 508.0 C932.6 526.1 927.3 547.0 923.6 566.5 C919.9 586.0 917.9 605.8 919.1 625.1 C920.4 644.5 926.9 663.8 931.3 682.9 C935.8 701.9 942.9 721.5 945.8 739.6 C948.7 757.7 946.1 773.7 948.9 791.5 C951.7 809.3 960.6 828.3 962.5 846.4 C964.4 864.5 960.6 891.1 960.3 900.0" stroke="#f7e6af" stroke-width="6.1" opacity="0.90"/>
<path d="M1065.7 424.5 C1056.3 426.8 1026.5 429.4 1009.3 438.0 C992.1 446.7 974.8 460.9 962.4 476.3 C950.1 491.7 942.0 511.5 935.0 530.4 C927.9 549.3 921.4 570.4 920.2 589.6 C919.0 608.8 924.7 626.4 927.7 645.6 C930.7 664.8 933.0 686.5 938.4 704.8 C943.9 723.0 957.0 737.4 960.5 755.0 C964.0 772.7 957.6 792.2 959.4 810.7 C961.2 829.2 969.5 851.1 971.2 866.0 C972.9 880.9 969.9 894.3 969.7 900.0" stroke="#a9683f" stroke-width="2.4" opacity="0.87"/>
<path d="M1070.1 425.5 C1060.7 427.6 1031.3 429.9 1014.0 438.1 C996.6 446.4 978.9 459.9 966.1 474.9 C953.3 489.9 944.6 509.4 937.3 528.1 C929.9 546.8 923.5 567.9 922.0 587.0 C920.5 606.1 925.3 623.6 928.2 642.7 C931.2 661.8 934.2 683.2 939.8 701.6 C945.4 720.0 958.1 735.6 961.8 753.1 C965.5 770.6 959.5 788.8 962.0 806.8 C964.6 824.8 974.7 845.6 977.2 861.1 C979.6 876.6 976.8 893.5 976.7 900.0" stroke="#a9683f" stroke-width="2.5" opacity="0.74"/>
<path d="M1074.3 426.8 C1065.0 428.9 1036.1 431.8 1018.7 439.9 C1001.3 447.9 983.2 460.6 970.1 475.2 C957.0 489.8 947.8 509.0 940.1 527.5 C932.5 545.9 926.1 567.0 924.2 586.0 C922.4 605.0 926.0 622.6 929.1 641.6 C932.2 660.5 936.7 681.2 942.7 699.7 C948.8 718.1 961.2 734.9 965.3 752.2 C969.4 769.4 963.8 785.9 967.4 803.3 C971.0 820.6 983.3 840.1 986.9 856.2 C990.4 872.3 988.3 892.7 988.5 900.0" stroke="#a9683f" stroke-width="2.1" opacity="0.89"/>
<path d="M1083.0 426.5 C1073.8 428.5 1045.7 431.0 1028.1 438.4 C1010.5 445.7 991.4 456.8 977.4 470.5 C963.5 484.2 952.9 502.6 944.5 520.7 C936.0 538.7 930.2 559.4 927.0 578.6 C923.8 597.8 922.6 617.2 925.3 636.1 C927.9 654.9 936.3 673.5 942.7 691.9 C949.0 710.2 959.0 729.3 963.4 746.4 C967.9 763.4 964.7 777.6 969.3 794.3 C974.0 811.0 987.1 828.9 991.6 846.5 C996.0 864.1 995.2 891.1 995.9 900.0" stroke="#a9683f" stroke-width="2.2" opacity="0.80"/>
<path d="M1078.6 427.2 C1069.4 429.6 1040.9 433.5 1023.4 441.5 C1006.0 449.6 987.5 461.3 974.1 475.5 C960.7 489.7 950.9 508.6 943.0 526.8 C935.0 545.1 928.7 565.9 926.4 584.9 C924.0 604.0 925.7 622.2 928.9 641.0 C932.0 659.7 938.7 679.4 945.3 697.7 C951.9 716.0 963.8 733.9 968.3 750.9 C972.9 767.8 967.9 782.8 972.5 799.5 C977.1 816.3 991.3 834.6 995.8 851.3 C1000.4 868.1 999.3 891.9 1000.0 900.0" stroke="#f7e6af" stroke-width="4.2" opacity="0.90"/>
<path d="M1074.0 429.1 C1064.9 432.2 1036.1 438.6 1019.0 447.7 C1001.8 456.8 984.1 469.0 971.3 483.8 C958.5 498.5 949.9 517.8 942.4 536.2 C935.0 554.6 928.0 575.6 926.6 594.3 C925.3 613.0 930.3 630.0 934.4 648.6 C938.5 667.2 943.7 687.8 951.1 705.7 C958.4 723.7 973.5 739.6 978.7 756.2 C983.8 772.7 977.4 788.3 982.2 805.0 C987.0 821.7 1002.6 840.4 1007.7 856.2 C1012.9 872.0 1012.2 892.7 1013.1 900.0" stroke="#a9683f" stroke-width="2.5" opacity="0.92"/>
<path d="M1069.4 430.8 C1060.3 434.3 1031.4 441.8 1014.5 451.6 C997.7 461.3 980.5 474.2 968.3 489.4 C956.1 504.6 948.2 524.1 941.2 542.7 C934.2 561.3 926.7 582.3 926.2 600.9 C925.6 619.5 933.2 635.8 937.9 654.3 C942.6 672.8 946.4 694.2 954.4 711.7 C962.3 729.2 980.0 742.7 985.6 759.0 C991.1 775.3 983.3 792.4 987.9 809.4 C992.5 826.4 1007.9 845.9 1013.0 861.0 C1018.1 876.1 1017.4 893.5 1018.3 900.0" stroke="#f7e6af" stroke-width="6.2" opacity="0.90"/>
<path d="M1078.5 429.0 C1069.3 432.6 1040.8 440.8 1023.6 450.1 C1006.4 459.4 988.4 470.7 975.4 485.1 C962.4 499.5 953.2 518.4 945.5 536.6 C937.7 554.7 930.9 575.5 929.0 594.2 C927.1 613.0 930.0 630.7 934.2 649.0 C938.5 667.4 946.2 686.8 954.3 704.6 C962.3 722.3 976.8 739.6 982.5 755.7 C988.3 771.9 982.5 785.7 988.6 801.6 C994.6 817.6 1012.2 835.0 1018.7 851.4 C1025.2 867.8 1026.0 891.9 1027.5 900.0" stroke="#a9683f" stroke-width="2.4" opacity="0.79"/>
<path d="M1064.5 435.2 C1055.5 439.4 1026.8 449.6 1010.5 460.5 C994.1 471.4 977.9 484.7 966.4 500.4 C954.9 516.1 948.0 535.8 941.5 554.5 C935.0 573.2 926.7 594.2 927.2 612.5 C927.7 630.9 938.5 646.4 944.6 664.5 C950.6 682.6 953.7 704.7 963.3 721.2 C972.8 737.7 995.0 747.8 1001.7 763.3 C1008.5 778.9 998.7 797.3 1003.7 814.4 C1008.6 831.5 1025.7 851.6 1031.4 865.9 C1037.2 880.1 1037.2 894.3 1038.3 900.0" stroke="#f7e6af" stroke-width="6.4" opacity="0.90"/>
<path d="M1080.9 429.4 C1076.6 431.3 1063.6 436.5 1055.1 440.4 C1046.5 444.2 1038.1 448.2 1029.7 452.5 C1021.4 456.8 1012.9 460.9 1005.2 466.1 C997.5 471.4 990.2 477.5 983.5 484.1 C976.8 490.6 970.4 497.7 965.1 505.5 C959.9 513.2 955.9 521.8 952.0 530.3 C948.2 538.8 945.1 547.8 942.1 556.6 C939.1 565.5 936.5 574.5 934.2 583.6 C931.8 592.7 929.8 602.6 928.1 611.0 C926.4 619.4 924.7 630.2 924.0 634.0" stroke="#f7e6af" stroke-width="6.2" opacity="0.90"/>
<path d="M1081.2 433.4 C1077.3 435.5 1065.7 441.7 1058.0 446.0 C1050.3 450.4 1042.6 454.9 1035.0 459.6 C1027.4 464.4 1019.6 469.0 1012.3 474.5 C1005.0 480.0 997.8 486.1 991.2 492.6 C984.6 499.0 978.1 505.9 972.7 513.3 C967.3 520.7 962.8 528.8 958.6 536.8 C954.4 544.9 950.8 553.2 947.3 561.6 C943.9 570.0 940.8 578.6 937.9 587.1 C935.0 595.7 932.3 605.2 930.0 613.0 C927.7 620.8 925.0 630.5 924.0 634.0" stroke="#f7e6af" stroke-width="5.0" opacity="0.90"/>
<path d="M1078.2 440.4 C1074.9 442.8 1064.8 450.1 1058.0 455.1 C1051.3 460.1 1044.5 465.2 1037.7 470.5 C1030.8 475.8 1023.8 481.2 1017.0 487.1 C1010.2 492.9 1003.2 499.1 996.8 505.6 C990.4 512.0 984.2 518.8 978.7 525.9 C973.2 533.0 968.6 540.6 964.0 548.2 C959.4 555.7 955.2 563.5 951.3 571.3 C947.4 579.2 944.0 587.3 940.5 595.2 C937.0 603.2 933.3 612.7 930.5 619.1 C927.8 625.6 925.1 631.5 924.0 634.0" stroke="#a9683f" stroke-width="2.1" opacity="0.86"/>
<path d="M1083.4 439.5 C1080.3 442.1 1071.2 449.9 1065.0 455.3 C1058.9 460.7 1052.7 466.2 1046.4 471.7 C1040.1 477.3 1033.7 482.8 1027.2 488.6 C1020.6 494.5 1013.7 500.6 1007.3 506.9 C1000.8 513.2 994.2 519.6 988.4 526.3 C982.6 533.1 977.3 540.1 972.2 547.3 C967.2 554.4 962.6 561.7 958.2 569.1 C953.8 576.5 949.7 584.2 945.8 591.8 C941.8 599.4 938.2 607.8 934.6 614.8 C931.0 621.8 925.8 630.8 924.0 634.0" stroke="#a9683f" stroke-width="2.1" opacity="0.75"/>
<path d="M1080.9 446.5 C1078.3 449.4 1070.6 458.2 1065.3 464.2 C1060.0 470.1 1054.7 476.2 1049.1 482.3 C1043.5 488.3 1037.6 494.4 1031.5 500.6 C1025.3 506.7 1018.6 512.8 1012.2 519.1 C1005.9 525.3 999.4 531.6 993.5 538.0 C987.6 544.5 982.1 551.0 976.7 557.7 C971.4 564.4 966.3 571.1 961.5 578.0 C956.6 585.0 952.2 592.3 947.7 599.3 C943.2 606.4 938.5 614.6 934.5 620.4 C930.6 626.2 925.8 631.7 924.0 634.0" stroke="#a9683f" stroke-width="2.3" opacity="0.71"/>
<path d="M1078.3 455.7 C1076.1 459.0 1069.8 468.7 1065.3 475.3 C1060.8 481.8 1056.4 488.4 1051.2 494.9 C1046.1 501.4 1040.5 507.9 1034.6 514.2 C1028.6 520.5 1021.9 526.5 1015.6 532.6 C1009.4 538.7 1002.9 544.7 996.9 550.8 C990.8 556.9 985.0 562.9 979.3 569.1 C973.7 575.3 968.2 581.6 962.9 588.1 C957.6 594.5 952.9 601.5 947.8 607.9 C942.7 614.3 936.3 622.2 932.3 626.5 C928.3 630.9 925.4 632.8 924.0 634.0" stroke="#a9683f" stroke-width="2.2" opacity="0.73"/>
<path d="M1081.2 456.9 C1079.5 460.4 1074.6 471.0 1071.0 478.1 C1067.4 485.2 1063.8 492.4 1059.5 499.3 C1055.2 506.3 1050.5 513.3 1045.1 519.8 C1039.7 526.3 1033.1 532.3 1026.9 538.3 C1020.6 544.3 1014.1 550.1 1007.7 555.7 C1001.4 561.4 995.0 566.8 988.8 572.5 C982.6 578.2 976.6 583.8 970.7 589.8 C964.9 595.7 959.5 602.1 953.8 608.0 C948.1 613.9 941.6 621.1 936.7 625.4 C931.7 629.7 926.1 632.6 924.0 634.0" stroke="#a9683f" stroke-width="2.0" opacity="0.92"/>
<path d="M1081.2 462.4 C1079.9 466.2 1076.1 477.6 1073.2 485.1 C1070.2 492.6 1067.3 500.3 1063.4 507.5 C1059.6 514.8 1055.2 522.1 1049.9 528.7 C1044.7 535.3 1038.2 541.2 1031.9 547.0 C1025.7 552.8 1019.0 558.3 1012.5 563.6 C1005.9 569.0 999.1 573.9 992.6 579.2 C986.1 584.4 979.7 589.7 973.5 595.2 C967.2 600.7 961.4 606.8 955.2 612.2 C949.1 617.7 941.5 624.3 936.3 627.9 C931.1 631.5 926.1 633.0 924.0 634.0" stroke="#c99263" stroke-width="3.8" opacity="0.55"/>
<path d="M1081.1 466.1 C1079.9 470.0 1076.6 481.7 1073.9 489.5 C1071.3 497.2 1068.7 505.1 1064.9 512.5 C1061.2 519.8 1056.8 527.2 1051.5 533.7 C1046.3 540.3 1039.7 546.1 1033.4 551.8 C1027.1 557.5 1020.4 562.8 1013.8 568.0 C1007.1 573.1 1000.1 577.8 993.5 582.9 C986.8 588.0 980.2 593.1 973.8 598.4 C967.4 603.8 961.5 609.7 955.0 614.9 C948.5 620.0 940.3 626.2 935.1 629.4 C929.9 632.6 925.8 633.2 924.0 634.0" stroke="#a9683f" stroke-width="2.3" opacity="0.79"/>
<path d="M1100.7 408.1 C1109.2 409.5 1137.6 408.3 1151.9 416.6 C1166.1 424.9 1176.9 442.8 1186.1 458.0 C1195.3 473.2 1201.5 490.7 1207.2 507.7 C1212.8 524.8 1216.5 542.5 1220.0 560.2 C1223.6 577.9 1226.4 595.8 1228.5 613.7 C1230.5 631.6 1231.1 649.7 1232.5 667.7 C1234.0 685.7 1235.4 703.7 1237.3 721.6 C1239.3 739.6 1239.2 758.4 1244.3 775.3 C1249.4 792.2 1261.4 811.7 1268.0 823.3 C1274.6 834.9 1281.3 841.4 1284.0 845.0" stroke="#a9683f" stroke-width="2.9" opacity="0.95"/>
<path d="M1088.8 416.4 C1096.6 416.4 1121.3 410.3 1135.3 416.5 C1149.3 422.8 1162.2 439.9 1172.7 453.9 C1183.1 467.9 1190.9 484.7 1198.0 500.6 C1205.2 516.5 1211.3 532.3 1215.7 549.3 C1220.0 566.2 1222.0 584.7 1224.1 602.5 C1226.1 620.3 1226.7 638.4 1227.8 656.3 C1228.9 674.2 1229.7 692.1 1230.8 710.0 C1231.9 727.8 1231.5 746.2 1234.6 763.4 C1237.6 780.5 1243.4 799.3 1249.0 813.0 C1254.6 826.7 1265.0 840.0 1268.2 845.5" stroke="#f7e6af" stroke-width="4.9" opacity="0.90"/>
<path d="M1084.0 422.3 C1091.1 421.1 1112.8 410.3 1126.5 414.7 C1140.1 419.0 1154.7 435.2 1165.8 448.4 C1176.9 461.7 1185.2 478.8 1193.0 494.3 C1200.8 509.8 1208.0 524.8 1212.8 541.4 C1217.7 558.1 1219.9 576.4 1222.2 594.2 C1224.5 611.9 1225.3 630.0 1226.4 647.9 C1227.5 665.8 1228.0 683.7 1229.0 701.6 C1229.9 719.4 1229.7 737.6 1231.9 754.9 C1234.2 772.3 1237.2 790.5 1242.5 805.6 C1247.9 820.7 1260.5 838.9 1264.1 845.6" stroke="#a9683f" stroke-width="2.2" opacity="0.75"/>
<path d="M1088.6 417.4 C1095.9 417.9 1119.1 413.6 1132.5 420.4 C1145.8 427.2 1158.4 444.4 1168.8 458.3 C1179.3 472.2 1187.6 488.6 1195.2 504.0 C1202.8 519.4 1210.1 534.0 1214.6 550.7 C1219.1 567.3 1220.5 586.0 1222.3 603.9 C1224.2 621.7 1224.7 639.7 1225.6 657.6 C1226.5 675.4 1226.9 693.3 1227.7 711.1 C1228.5 728.9 1227.8 747.1 1230.2 764.2 C1232.6 781.3 1237.5 799.9 1242.3 813.5 C1247.1 827.0 1256.1 840.3 1258.9 845.7" stroke="#a9683f" stroke-width="2.6" opacity="0.93"/>
<path d="M1094.2 415.9 C1101.2 418.2 1123.6 420.3 1136.2 429.4 C1148.8 438.5 1159.7 456.2 1169.7 470.4 C1179.8 484.6 1188.8 499.7 1196.3 514.8 C1203.8 529.9 1210.4 544.4 1214.6 561.0 C1218.8 577.5 1219.8 596.4 1221.3 614.2 C1222.8 632.0 1222.9 650.0 1223.4 667.8 C1224.0 685.6 1224.2 703.4 1224.6 721.1 C1225.1 738.8 1223.9 757.1 1226.1 773.8 C1228.4 790.5 1234.3 809.2 1238.1 821.2 C1242.0 833.2 1247.3 841.8 1249.1 846.0" stroke="#f7e6af" stroke-width="5.2" opacity="0.90"/>
<path d="M1084.0 422.7 C1090.1 422.8 1108.5 417.2 1120.6 423.3 C1132.7 429.3 1145.7 445.9 1156.6 459.2 C1167.4 472.5 1176.7 488.8 1185.6 503.1 C1194.4 517.4 1204.2 529.5 1209.7 545.2 C1215.1 560.9 1216.3 579.9 1218.3 597.5 C1220.2 615.1 1220.7 633.2 1221.3 651.0 C1221.9 668.8 1221.8 686.6 1221.9 704.3 C1222.0 722.0 1221.0 739.9 1222.0 757.0 C1222.9 774.2 1224.3 792.1 1227.5 807.0 C1230.8 821.8 1239.3 839.6 1241.6 846.2" stroke="#f7e6af" stroke-width="6.0" opacity="0.90"/>
<path d="M1089.9 420.0 C1095.9 422.7 1114.2 426.9 1125.6 436.4 C1136.9 446.0 1147.7 463.6 1158.0 477.4 C1168.4 491.1 1178.9 505.2 1187.8 519.0 C1196.6 532.8 1206.4 544.3 1211.2 560.0 C1216.1 575.6 1215.6 595.3 1216.7 613.0 C1217.8 630.7 1217.8 648.6 1217.8 666.3 C1217.8 684.1 1217.3 701.8 1216.8 719.3 C1216.4 736.8 1214.5 754.8 1215.0 771.4 C1215.4 788.0 1217.7 806.2 1219.6 818.7 C1221.6 831.3 1225.4 841.9 1226.5 846.6" stroke="#a9683f" stroke-width="2.7" opacity="0.93"/>
<path d="M1089.8 420.2 C1095.7 423.1 1113.8 427.5 1125.0 437.1 C1136.3 446.8 1147.0 464.4 1157.4 478.1 C1167.7 491.9 1178.4 505.9 1187.3 519.6 C1196.2 533.2 1206.2 544.6 1211.0 560.2 C1215.9 575.8 1215.3 595.5 1216.4 613.2 C1217.4 631.0 1217.4 648.9 1217.4 666.6 C1217.4 684.3 1216.8 702.0 1216.3 719.5 C1215.7 737.0 1213.8 755.0 1214.2 771.5 C1214.5 788.1 1216.6 806.3 1218.4 818.8 C1220.2 831.3 1223.8 842.0 1224.9 846.6" stroke="#f7e6af" stroke-width="5.9" opacity="0.90"/>
<path d="M1089.5 421.3 C1095.0 424.5 1111.8 430.2 1122.7 440.3 C1133.5 450.3 1143.9 468.0 1154.3 481.6 C1164.8 495.3 1175.9 508.8 1185.2 522.1 C1194.5 535.4 1205.2 546.0 1210.1 561.3 C1215.1 576.7 1214.1 596.6 1215.0 614.3 C1215.9 632.0 1215.8 649.9 1215.6 667.6 C1215.4 685.2 1214.6 702.9 1213.7 720.3 C1212.9 737.7 1210.8 755.7 1210.6 772.2 C1210.5 788.7 1211.7 806.7 1212.8 819.2 C1214.0 831.6 1216.7 842.2 1217.5 846.8" stroke="#c99263" stroke-width="3.9" opacity="0.55"/>
<path d="M1093.2 425.6 C1098.1 430.2 1112.4 441.9 1122.3 453.7 C1132.3 465.5 1142.4 483.1 1153.0 496.4 C1163.6 509.6 1176.6 520.5 1185.9 533.2 C1195.1 545.9 1204.2 557.2 1208.6 572.6 C1213.0 588.0 1211.7 607.9 1212.1 625.5 C1212.6 643.2 1211.9 661.0 1211.1 678.5 C1210.3 696.1 1208.9 713.6 1207.3 730.9 C1205.8 748.1 1203.1 766.0 1202.0 782.0 C1200.8 798.0 1200.7 816.0 1200.6 826.9 C1200.4 837.7 1201.0 843.9 1201.1 847.3" stroke="#f7e6af" stroke-width="4.8" opacity="0.90"/>
<path d="M1085.3 423.7 C1089.6 427.0 1101.7 433.6 1110.8 443.8 C1119.9 454.1 1129.6 471.7 1139.9 485.1 C1150.3 498.5 1162.1 512.3 1173.1 524.2 C1184.0 536.1 1199.3 542.3 1205.5 556.4 C1211.7 570.5 1209.6 591.2 1210.4 608.7 C1211.2 626.3 1211.1 644.2 1210.5 661.8 C1209.9 679.3 1208.5 696.9 1206.9 714.2 C1205.3 731.5 1202.6 749.2 1200.9 765.7 C1199.1 782.2 1197.2 799.7 1196.3 813.3 C1195.3 826.9 1195.3 841.7 1195.1 847.4" stroke="#f7e6af" stroke-width="6.4" opacity="0.90"/>
<path d="M1084.0 423.6 C1087.9 426.8 1098.6 433.1 1107.1 443.2 C1115.6 453.3 1124.9 470.8 1135.1 484.1 C1145.3 497.5 1157.2 511.8 1168.4 523.5 C1179.6 535.1 1195.6 540.4 1202.4 554.0 C1209.2 567.6 1208.0 587.8 1209.2 605.1 C1210.3 622.5 1210.0 640.5 1209.4 658.1 C1208.8 675.7 1207.2 693.2 1205.5 710.6 C1203.7 727.9 1201.1 745.4 1198.9 762.0 C1196.8 778.6 1194.3 795.8 1192.7 810.0 C1191.2 824.3 1190.0 841.3 1189.4 847.6" stroke="#a9683f" stroke-width="2.4" opacity="0.94"/>
<path d="M1087.6 427.0 C1091.3 432.0 1101.3 445.1 1109.7 457.3 C1118.1 469.6 1127.4 487.4 1138.0 500.5 C1148.7 513.6 1162.5 524.7 1173.7 535.9 C1184.8 547.0 1199.5 553.3 1205.2 567.4 C1210.8 581.4 1207.4 602.5 1207.5 620.1 C1207.6 637.7 1207.0 655.4 1205.8 672.9 C1204.6 690.4 1202.5 707.8 1200.1 724.9 C1197.7 742.0 1194.3 759.6 1191.4 775.6 C1188.5 791.7 1185.0 809.1 1182.7 821.1 C1180.4 833.2 1178.5 843.4 1177.6 847.9" stroke="#f7e6af" stroke-width="4.4" opacity="0.90"/>
<path d="M1085.0 425.2 C1088.1 430.0 1096.1 442.1 1103.5 454.2 C1110.9 466.2 1119.0 484.2 1129.2 497.5 C1139.5 510.8 1152.7 523.4 1164.9 533.9 C1177.0 544.4 1195.5 547.3 1202.3 560.4 C1209.1 573.5 1205.4 595.0 1205.7 612.5 C1206.1 630.0 1205.7 647.8 1204.4 665.3 C1203.2 682.7 1201.0 700.2 1198.5 717.3 C1195.9 734.4 1192.5 751.8 1189.1 768.1 C1185.7 784.3 1181.6 801.4 1178.2 814.7 C1174.9 828.1 1170.6 842.6 1169.1 848.1" stroke="#a9683f" stroke-width="2.2" opacity="0.93"/>
<path d="M1088.5 430.8 C1091.7 436.7 1099.8 452.9 1107.6 466.1 C1115.5 479.2 1124.9 496.9 1135.8 509.6 C1146.8 522.3 1162.1 531.5 1173.4 542.2 C1184.7 552.9 1198.3 559.6 1203.6 573.6 C1208.9 587.6 1205.4 608.7 1205.2 626.2 C1204.9 643.8 1204.0 661.5 1202.4 678.9 C1200.7 696.3 1198.1 713.6 1195.2 730.6 C1192.2 747.6 1188.4 765.1 1184.6 780.8 C1180.8 796.6 1175.7 813.8 1172.5 825.1 C1169.3 836.3 1166.6 844.4 1165.4 848.2" stroke="#f7e6af" stroke-width="4.4" opacity="0.90"/>
<path d="M1088.6 436.2 C1091.3 442.9 1097.0 462.4 1104.3 476.3 C1111.7 490.2 1121.4 507.7 1132.8 519.8 C1144.2 531.8 1161.4 538.7 1172.9 548.7 C1184.3 558.8 1196.8 566.2 1201.6 580.2 C1206.5 594.2 1202.8 615.3 1202.2 632.8 C1201.6 650.3 1200.3 667.9 1198.1 685.2 C1195.9 702.4 1192.7 719.6 1189.1 736.5 C1185.4 753.3 1181.1 770.7 1176.2 786.2 C1171.2 801.6 1163.7 818.6 1159.4 829.0 C1155.2 839.5 1152.1 845.4 1150.6 848.6" stroke="#f7e6af" stroke-width="6.5" opacity="0.90"/>
<path d="M1087.0 434.7 C1089.2 441.5 1093.6 461.4 1100.2 475.6 C1106.9 489.8 1115.8 507.5 1127.0 519.8 C1138.2 532.1 1155.2 539.8 1167.5 549.3 C1179.8 558.8 1195.2 563.5 1200.7 576.8 C1206.3 590.2 1201.6 611.9 1201.0 629.4 C1200.3 646.9 1199.1 664.5 1196.9 681.7 C1194.7 699.0 1191.4 716.2 1187.6 733.0 C1183.7 749.9 1179.2 767.1 1173.9 782.7 C1168.5 798.2 1160.5 815.1 1155.5 826.1 C1150.5 837.1 1145.6 845.0 1143.7 848.8" stroke="#f7e6af" stroke-width="4.9" opacity="0.90"/>
<path d="M1084.5 427.2 C1086.1 433.9 1089.0 453.1 1094.1 467.4 C1099.3 481.8 1105.5 500.2 1115.5 513.4 C1125.5 526.5 1140.6 537.8 1154.3 546.5 C1168.1 555.2 1190.5 553.8 1198.1 565.6 C1205.7 577.4 1200.0 600.0 1199.8 617.4 C1199.5 634.7 1198.7 652.5 1196.7 669.8 C1194.7 687.1 1191.5 704.4 1187.7 721.3 C1183.9 738.1 1179.4 755.3 1174.0 771.1 C1168.5 787.0 1161.5 803.6 1155.1 816.6 C1148.7 829.6 1139.0 843.6 1135.8 849.0" stroke="#c99263" stroke-width="3.8" opacity="0.55"/>
<path d="M1084.9 430.7 C1086.2 437.9 1088.0 459.1 1093.1 474.0 C1098.2 488.8 1105.0 507.2 1115.5 520.0 C1125.9 532.8 1142.0 542.4 1156.0 550.8 C1170.0 559.2 1192.3 558.3 1199.4 570.3 C1206.5 582.3 1199.3 605.2 1198.5 622.7 C1197.7 640.1 1196.9 657.7 1194.6 675.0 C1192.3 692.3 1188.7 709.5 1184.6 726.3 C1180.4 743.1 1175.6 760.1 1169.6 775.8 C1163.6 791.5 1155.2 808.0 1148.5 820.2 C1141.7 832.5 1132.5 844.4 1129.3 849.2" stroke="#a9683f" stroke-width="3.0" opacity="0.86"/>
<path d="M1084.0 424.6 C1085.1 431.8 1086.4 452.7 1090.5 467.8 C1094.6 482.8 1099.1 501.5 1108.5 514.9 C1118.0 528.4 1133.0 540.3 1147.1 548.6 C1161.3 557.0 1184.9 553.8 1193.4 564.8 C1201.9 575.8 1197.7 597.6 1197.9 614.6 C1198.1 631.6 1196.8 649.6 1194.7 666.9 C1192.6 684.2 1189.2 701.5 1185.2 718.3 C1181.2 735.2 1176.4 752.2 1170.5 768.1 C1164.6 784.0 1157.4 800.3 1149.8 813.8 C1142.2 827.4 1129.1 843.4 1125.0 849.3" stroke="#c99263" stroke-width="5.4" opacity="0.55"/>
<path d="M1084.2 428.5 C1084.9 436.4 1084.4 460.1 1088.1 475.9 C1091.9 491.8 1096.8 510.5 1106.7 523.6 C1116.6 536.6 1132.8 546.9 1147.6 554.5 C1162.4 562.1 1187.4 558.0 1195.5 569.0 C1203.5 580.0 1196.6 603.2 1195.9 620.5 C1195.3 637.8 1194.2 655.5 1191.7 672.7 C1189.2 689.9 1185.4 707.1 1180.8 723.8 C1176.2 740.5 1171.0 757.4 1164.3 773.1 C1157.5 788.8 1148.6 805.0 1140.3 817.8 C1132.0 830.5 1118.8 844.3 1114.5 849.6" stroke="#a9683f" stroke-width="2.9" opacity="0.91"/>
<path d="M1084.3 446.3 C1084.8 454.9 1082.3 481.8 1087.2 497.8 C1092.1 513.7 1101.4 531.0 1113.6 542.0 C1125.8 552.9 1146.9 555.9 1160.5 563.5 C1174.1 571.0 1189.7 574.6 1195.0 587.3 C1200.4 600.0 1194.3 622.3 1192.8 639.6 C1191.2 657.0 1189.2 674.4 1185.7 691.4 C1182.1 708.5 1177.4 725.4 1171.7 741.8 C1166.0 758.3 1160.2 775.2 1151.7 790.1 C1143.1 804.9 1128.5 821.2 1120.3 831.1 C1112.2 841.1 1105.5 846.8 1102.6 849.9" stroke="#a9683f" stroke-width="2.3" opacity="0.77"/>
<ellipse cx="1083" cy="440" rx="9" ry="22" fill="#a45f3c" opacity="0.75" filter="url(#bl2)"/>
<path d="M1086.0 428.0 C1091.7 430.0 1109.3 433.0 1120.0 440.0 C1130.7 447.0 1140.8 456.7 1150.0 470.0 C1159.2 483.3 1167.5 503.7 1175.0 520.0 C1182.5 536.3 1191.7 560.0 1195.0 568.0" stroke="#a05d3a" stroke-width="2.4" opacity="0.85"/>
<path d="M1086.0 436.0 C1090.0 440.0 1101.8 449.3 1110.0 460.0 C1118.2 470.7 1126.7 485.8 1135.0 500.0 C1143.3 514.2 1151.7 533.7 1160.0 545.0 C1168.3 556.3 1180.8 564.2 1185.0 568.0" stroke="#a05d3a" stroke-width="2.4" opacity="0.85"/>
<path d="M1085.0 430.0 C1092.5 429.2 1116.7 421.7 1130.0 425.0 C1143.3 428.3 1154.2 437.5 1165.0 450.0 C1175.8 462.5 1186.7 481.7 1195.0 500.0 C1203.3 518.3 1211.7 550.0 1215.0 560.0" stroke="#a05d3a" stroke-width="2.4" opacity="0.85"/>
<path d="M1084.0 426.0 C1076.7 424.7 1054.0 418.2 1040.0 418.0 C1026.0 417.8 1013.3 418.8 1000.0 425.0 C986.7 431.2 966.7 450.0 960.0 455.0" stroke="#a05d3a" stroke-width="2.4" opacity="0.85"/>
<path d="M1080.0 440.0 C1073.3 442.0 1053.3 445.7 1040.0 452.0 C1026.7 458.3 1012.0 467.5 1000.0 478.0 C988.0 488.5 976.7 500.5 968.0 515.0 C959.3 529.5 953.5 548.3 948.0 565.0 C942.5 581.7 937.2 606.7 935.0 615.0" stroke="#9e5c38" stroke-width="5" opacity="0.85"/>
<path d="M1075.0 432.0 C1068.3 433.3 1048.3 435.0 1035.0 440.0 C1021.7 445.0 1007.5 452.3 995.0 462.0 C982.5 471.7 969.5 484.2 960.0 498.0 C950.5 511.8 943.8 528.0 938.0 545.0 C932.2 562.0 927.2 590.8 925.0 600.0" stroke="#f6e2a8" stroke-width="4" opacity="0.85"/>
<path d="M1084.0 445.0 C1076.7 449.2 1054.0 457.5 1040.0 470.0 C1026.0 482.5 1010.8 503.3 1000.0 520.0 C989.2 536.7 979.2 561.7 975.0 570.0" stroke="#b27048" stroke-width="2.5" opacity="0.7"/>
<path d="M1070.0 470.0 C1065.8 478.3 1053.3 504.0 1045.0 520.0 C1036.7 536.0 1024.2 558.3 1020.0 566.0" stroke="#a9683f" stroke-width="2.5" opacity="0.8"/>
<path d="M1055.0 465.0 C1049.2 474.2 1030.8 500.0 1020.0 520.0 C1009.2 540.0 995.0 574.2 990.0 585.0" stroke="#f7e6af" stroke-width="4" opacity="0.8"/>
</g>
<path d="M966 770 L1000 812 L1036 842 L1040 888 L985 888 L968 820 Z" fill="#a4644a" opacity="0.92" filter="url(#bl2)"/>
<path d="M1147 843 L1172 818 L1192 792 L1212 785 L1222 830 L1215 888 L1152 888 Z" fill="#a4644a" opacity="0.92" filter="url(#bl2)"/>
<g fill="none" stroke-linecap="round" filter="url(#bl1)">
<path d="M968.0 800.0 C970.8 808.3 981.3 835.3 985.0 850.0 C988.7 864.7 989.2 881.7 990.0 888.0" stroke="#e8c48e" stroke-width="3"/>
<path d="M1000.0 825.0 C1002.5 830.8 1011.3 849.5 1015.0 860.0 C1018.7 870.5 1020.8 883.3 1022.0 888.0" stroke="#c08860" stroke-width="2.5"/>
<path d="M1215.0 740.0 C1213.3 750.0 1208.3 781.7 1205.0 800.0 C1201.7 818.3 1197.5 835.3 1195.0 850.0 C1192.5 864.7 1190.8 881.7 1190.0 888.0" stroke="#f0d69c" stroke-width="3.5"/>
<path d="M1165.0 830.0 C1164.5 839.7 1162.5 878.3 1162.0 888.0" stroke="#b87a55" stroke-width="2.5"/>
</g>
</g>
<g fill="none" stroke="#8f5434" stroke-linecap="round" filter="url(#bl05)" opacity="0.95">
<path d="M1083.0 422.0 C1082.4 421.3 1082.8 420.9 1079.3 418.0 C1075.8 415.1 1070.1 408.2 1062.2 404.7 C1054.3 401.2 1043.3 396.4 1031.9 397.0 C1020.5 397.6 1005.1 403.1 994.0 408.5 C982.9 413.9 974.0 421.5 965.4 429.4 C956.8 437.3 949.2 445.9 942.6 456.0 C936.0 466.1 930.7 475.8 925.6 490.0 C920.5 504.2 916.1 524.7 912.3 541.4 C908.5 558.1 905.0 564.6 902.7 590.0 C900.5 615.4 900.8 659.1 898.8 693.6 C896.8 728.1 894.5 768.9 891.0 797.0 C887.5 825.1 880.2 851.2 878.0 862.0" stroke-width="2.3"/>
<path d="M1084.0 422.0 C1085.8 420.1 1088.8 413.3 1094.7 410.4 C1100.6 407.5 1110.9 404.4 1119.4 404.7 C1128.0 405.0 1137.8 407.9 1146.0 412.3 C1154.2 416.7 1161.8 423.4 1168.7 431.3 C1175.7 439.2 1182.0 449.2 1187.7 459.7 C1193.4 470.1 1198.5 482.0 1202.9 494.0 C1207.3 506.0 1211.1 519.3 1214.3 531.9 C1217.5 544.5 1219.6 556.8 1221.9 569.8 C1224.2 582.8 1226.1 589.4 1228.3 610.0 C1230.5 630.6 1232.4 666.7 1235.0 693.6 C1237.6 720.5 1240.4 752.6 1244.0 771.2 C1247.6 789.8 1254.7 799.4 1256.8 805.0" stroke-width="2.3"/>
<path d="M1084.2 459.7 C1082.8 466.7 1079.2 488.8 1075.5 501.5 C1071.8 514.2 1069.3 525.0 1062.0 535.7 C1054.7 546.5 1044.5 555.9 1031.9 566.0 C1019.3 576.1 1000.7 586.4 986.3 596.4 C971.9 606.4 954.8 619.7 945.4 626.0 C936.0 632.3 932.6 632.7 930.0 634.0" stroke-width="2.2"/>
<path d="M1084.2 459.7 C1084.4 465.4 1083.1 483.2 1085.2 494.0 C1087.3 504.8 1091.2 515.5 1096.6 524.3 C1102.0 533.1 1108.7 540.7 1117.5 547.0 C1126.3 553.3 1137.4 558.4 1149.7 562.2 C1162.0 566.0 1180.1 567.9 1191.5 569.8 C1202.9 571.7 1213.6 573.0 1218.0 573.6" stroke-width="2.2"/>
<path d="M945.4 626.0 C945.0 628.6 941.5 630.5 942.8 641.8 C944.1 653.1 948.5 677.6 953.2 693.6 C958.0 709.6 965.3 726.8 971.3 737.6 C977.3 748.4 983.3 753.1 989.4 758.3 C995.5 763.5 1004.6 766.9 1007.6 768.6" stroke-width="2"/>
<path d="M1194.6 590.0 C1193.7 603.0 1192.8 644.0 1189.4 667.7 C1186.0 691.4 1180.0 713.0 1174.0 732.4 C1168.0 751.8 1159.2 771.3 1153.2 784.2 C1147.2 797.1 1145.9 801.4 1137.7 810.0 C1129.5 818.6 1109.6 831.7 1104.0 836.0" stroke-width="2"/>
</g>
<path d="M1036.5 846 L1038.6 886 M1147 843 L1153.2 886" stroke="#1a1a1a" stroke-width="2.6" fill="none"/>
<g clip-path="url(#hc)" fill="none" filter="url(#bl1)">
<path d="M1222.0 800.0 C1223.3 808.3 1227.7 835.3 1230.0 850.0 C1232.3 864.7 1235.0 881.7 1236.0 888.0" stroke="#f0d69c" stroke-width="4"/>
<path d="M1232.0 800.0 C1233.3 808.3 1238.2 835.3 1240.0 850.0 C1241.8 864.7 1242.5 881.7 1243.0 888.0" stroke="#b27850" stroke-width="2.5"/>
<path d="M1210.0 830.0 C1211.3 839.7 1216.7 878.3 1218.0 888.0" stroke="#c99263" stroke-width="3"/>
<path d="M1245.0 810.0 C1247.8 813.3 1256.2 824.7 1262.0 830.0 C1267.8 835.3 1277.0 840.0 1280.0 842.0" stroke="#f0d69c" stroke-width="3"/>
</g>
<g fill="none" stroke-linecap="round" stroke-linejoin="round">
<path d="M1820.9 369.0 C1816.1 366.9 1803.0 357.0 1791.9 356.6 C1780.9 356.2 1767.7 360.3 1754.6 366.9 C1741.5 373.4 1725.3 383.1 1713.2 395.9 C1701.1 408.7 1691.4 425.9 1682.1 443.5 C1672.8 461.1 1664.2 484.2 1657.3 501.5 C1650.4 518.8 1644.5 532.0 1640.7 547.0 C1636.9 562.0 1636.9 575.7 1634.5 591.8 C1632.1 607.9 1629.4 629.7 1626.3 643.5 C1623.2 657.3 1620.8 663.6 1616.0 674.6 C1611.2 685.6 1602.1 697.7 1597.3 709.8 C1592.5 721.9 1588.2 733.5 1587.0 747.0 C1585.8 760.5 1587.8 777.5 1590.4 791.0 C1593.0 804.5 1601.4 817.2 1602.8 828.3 C1604.2 839.3 1602.2 849.7 1598.7 857.3 C1595.2 864.9 1589.0 868.7 1582.1 873.9 C1575.2 879.1 1564.5 882.5 1557.3 888.4 C1550.0 894.3 1543.1 900.5 1538.6 909.1 C1534.1 917.7 1530.7 931.6 1530.4 940.2 C1530.1 948.8 1533.8 955.5 1536.6 960.9 C1539.4 966.2 1545.3 970.4 1547.0 972.3" stroke="#262626" stroke-width="3.1"/>
<path d="M1616.0 674.6 C1615.3 676.3 1614.2 677.1 1611.8 685.0 C1609.4 692.9 1603.1 710.1 1601.4 722.2 C1599.7 734.3 1600.8 747.6 1601.4 757.4 C1602.0 767.1 1601.9 771.6 1604.9 780.7 C1607.9 789.8 1616.0 801.4 1619.4 811.8 C1622.9 822.1 1625.2 832.4 1625.6 842.8 C1625.9 853.1 1624.6 864.2 1621.5 873.9 C1618.4 883.6 1612.5 891.5 1607.0 900.8 C1601.5 910.1 1593.5 919.4 1588.3 929.8 C1583.1 940.2 1577.3 953.0 1575.9 963.0 C1574.5 973.0 1576.0 981.8 1580.0 990.0 C1584.0 998.2 1593.8 1005.3 1600.0 1012.0 C1606.2 1018.7 1614.2 1022.8 1617.0 1030.0 C1619.8 1037.2 1620.7 1047.3 1617.0 1055.0 C1613.3 1062.7 1602.0 1069.3 1595.0 1076.0 C1588.0 1082.7 1578.1 1091.8 1574.7 1095.0" stroke="#262626" stroke-width="3.1"/>
<path d="M1618.4 818.0 C1617.9 821.5 1617.9 831.1 1615.3 838.7 C1612.7 846.3 1608.3 856.6 1602.8 863.5 C1597.3 870.4 1589.7 874.5 1582.1 880.0 C1574.5 885.5 1564.2 890.5 1557.3 896.7 C1550.4 902.9 1544.5 909.8 1540.7 917.4 C1536.9 925.0 1533.8 933.6 1534.5 942.2 C1535.2 950.8 1543.2 964.7 1544.9 969.2" stroke="#333" stroke-width="2.3"/>
<path d="M1823.0 381.4 C1818.5 380.9 1805.7 377.9 1796.0 378.3 C1786.3 378.7 1776.4 378.8 1765.0 383.5 C1753.6 388.2 1738.1 396.3 1727.7 406.3 C1717.3 416.3 1709.0 428.7 1702.8 443.5 C1696.6 458.3 1693.2 478.1 1690.4 495.3 C1687.7 512.5 1687.0 530.9 1686.3 547.0 C1685.6 563.1 1687.7 577.4 1686.3 591.8 C1684.9 606.2 1683.5 619.4 1678.0 633.2 C1672.5 647.0 1660.1 660.8 1653.2 674.6 C1646.3 688.4 1639.4 703.9 1636.6 716.0 C1633.8 728.1 1635.0 734.5 1636.6 747.0 C1638.2 759.5 1643.6 777.5 1646.3 791.0 C1649.0 804.5 1652.2 816.2 1652.5 828.3 C1652.8 840.4 1651.2 853.1 1648.4 863.5 C1645.7 873.9 1641.2 880.5 1636.0 890.5 C1630.8 900.5 1622.1 912.6 1617.3 923.6 C1612.5 934.6 1607.7 947.0 1607.0 956.7 C1606.3 966.4 1609.4 974.1 1613.2 981.6 C1617.0 989.1 1624.5 995.6 1630.0 1002.0 C1635.5 1008.4 1642.7 1013.7 1646.0 1020.0 C1649.3 1026.3 1651.0 1033.3 1650.0 1040.0 C1649.0 1046.7 1645.8 1053.3 1640.0 1060.0 C1634.2 1066.7 1621.7 1074.2 1615.0 1080.0 C1608.3 1085.8 1602.5 1092.5 1600.0 1095.0" stroke="#4a4a4a" stroke-width="1.7"/>
<path d="M1820.9 402.1 C1817.5 402.1 1808.8 399.3 1800.2 402.1 C1791.6 404.9 1779.5 411.1 1769.1 418.7 C1758.7 426.3 1746.6 436.6 1738.0 447.7 C1729.4 458.8 1722.8 471.9 1717.3 485.0 C1711.8 498.1 1707.3 510.3 1704.9 526.4 C1702.5 542.5 1702.5 565.3 1702.8 581.4 C1703.1 597.5 1706.6 610.7 1707.0 622.8 C1707.4 634.9 1708.1 640.2 1705.0 654.0 C1701.9 667.8 1693.2 691.9 1688.4 705.7 C1683.6 719.5 1679.1 726.8 1676.0 736.7 C1672.9 746.6 1671.3 754.2 1670.0 765.0 C1668.7 775.8 1667.8 788.4 1668.0 801.4 C1668.2 814.4 1668.6 830.7 1671.2 842.8 C1673.8 854.9 1678.4 866.5 1683.6 873.9 C1688.8 881.3 1697.0 885.5 1702.2 887.4 C1707.4 889.3 1712.6 885.6 1714.7 885.3" stroke="#333" stroke-width="2.3"/>
<path d="M1818.8 406.3 C1813.3 407.7 1796.0 409.0 1785.7 414.5 C1775.4 420.0 1765.0 428.3 1756.7 439.4 C1748.4 450.4 1741.5 466.3 1736.0 480.8 C1730.5 495.3 1726.6 509.9 1723.5 526.4 C1720.4 542.9 1719.0 567.7 1717.3 580.0 C1715.6 592.3 1713.9 596.7 1713.2 600.0" stroke="#777" stroke-width="1.4"/>
<path d="M1733.9 489.0 C1731.8 495.2 1724.6 511.2 1721.5 526.4 C1718.4 541.6 1715.3 562.2 1715.3 580.0 C1715.3 597.8 1717.3 617.4 1721.5 633.2 C1725.7 649.0 1734.3 660.8 1740.2 674.6 C1746.1 688.4 1752.9 702.2 1756.7 716.0 C1760.5 729.8 1762.0 750.5 1763.0 757.4" stroke="#777" stroke-width="1.4"/>
<path d="M1702.9 612.5 C1704.3 619.4 1709.1 640.2 1711.2 654.0 C1713.3 667.8 1715.3 681.5 1715.3 695.3 C1715.3 709.1 1712.5 725.9 1711.2 736.7 C1709.9 747.5 1708.2 749.2 1707.4 760.0 C1706.6 770.8 1705.2 786.9 1706.4 801.4 C1707.6 815.9 1712.3 832.5 1714.7 847.0 C1717.1 861.5 1719.9 875.3 1720.9 888.4 C1721.9 901.5 1719.2 914.0 1720.9 925.7 C1722.6 937.4 1726.7 949.1 1731.2 958.8 C1735.7 968.4 1743.0 976.7 1747.8 983.6 C1752.6 990.5 1755.3 991.6 1760.0 1000.0 C1764.7 1008.4 1772.6 1018.1 1775.8 1033.9 C1779.0 1049.7 1778.6 1084.8 1779.2 1095.0" stroke="#262626" stroke-width="3.1"/>
<path d="M1705.0 602.0 C1707.1 610.7 1712.2 637.4 1717.4 654.0 C1722.6 670.6 1731.2 687.7 1736.0 701.5 C1740.8 715.3 1744.1 727.0 1746.4 736.7 C1748.7 746.5 1749.3 750.2 1749.9 760.0 C1750.5 769.8 1751.6 785.9 1749.9 795.2 C1748.2 804.5 1743.0 808.6 1739.5 815.9 C1736.0 823.1 1731.3 831.5 1729.2 838.7 C1727.1 846.0 1726.4 852.5 1727.1 859.4 C1727.8 866.3 1730.5 873.2 1733.3 880.1 C1736.0 887.0 1741.9 897.3 1743.6 900.8" stroke="#262626" stroke-width="3.1"/>
<path d="M1725.7 550.0 C1725.0 558.7 1722.2 588.1 1721.5 602.0 C1720.8 615.9 1718.4 621.1 1721.5 633.2 C1724.6 645.3 1734.3 660.8 1740.2 674.6 C1746.1 688.4 1752.9 702.2 1756.7 716.0 C1760.5 729.8 1762.5 743.9 1763.0 757.4 C1763.5 770.9 1763.6 785.8 1760.0 797.3 C1756.4 808.8 1746.4 817.0 1741.6 826.3 C1736.8 835.6 1732.2 844.2 1731.2 853.2 C1730.2 862.2 1733.1 872.1 1735.4 880.1 C1737.7 888.1 1743.4 897.5 1745.0 901.0" stroke="#777" stroke-width="1.4"/>
<path d="M1760.0 813.8 C1757.3 817.9 1747.4 829.7 1743.6 838.7 C1739.8 847.7 1736.7 859.2 1737.4 867.7 C1738.1 876.2 1746.2 886.3 1748.0 890.0" stroke="#777" stroke-width="1.4"/>
<path d="M1833.3 414.5 C1828.8 416.6 1815.0 420.8 1806.4 427.0 C1797.8 433.2 1788.4 442.1 1781.5 451.8 C1774.6 461.5 1769.1 472.6 1765.0 485.0 C1760.9 497.4 1760.5 512.6 1756.7 526.4 C1752.9 540.2 1745.3 558.6 1742.2 567.8 C1739.1 577.0 1739.4 572.2 1738.0 581.4 C1736.6 590.6 1733.3 609.0 1734.0 622.8 C1734.7 636.6 1738.1 652.1 1742.2 664.2 C1746.3 676.3 1753.6 684.9 1758.8 695.3 C1764.0 705.7 1770.2 716.0 1773.3 726.4 C1776.4 736.8 1776.9 750.0 1777.4 757.4 C1777.9 764.8 1776.6 768.7 1776.4 771.0" stroke="#262626" stroke-width="3.1"/>
<path d="M1825.0 369.0 C1825.7 372.8 1827.8 384.2 1829.2 391.8 C1830.6 399.4 1832.6 410.7 1833.3 414.5" stroke="#4a4a4a" stroke-width="1.7"/>
<path d="M1831.2 369.0 C1831.7 372.8 1833.2 384.5 1834.0 392.0 C1834.8 399.5 1835.7 410.3 1836.0 414.0" stroke="#777" stroke-width="1.4"/>
<path d="M1833.3 371.0 C1834.3 370.0 1835.0 366.0 1839.5 364.8 C1844.0 363.6 1853.2 363.6 1860.0 363.8 C1866.8 364.0 1868.0 363.4 1880.3 366.2 C1892.6 369.0 1925.0 378.4 1934.0 380.8" stroke="#333" stroke-width="2.3"/>
<path d="M1835.4 379.3 C1839.5 379.1 1852.5 378.1 1860.0 378.3 C1867.5 378.6 1868.0 376.3 1880.3 380.8 C1892.6 385.3 1925.0 401.4 1934.0 405.5" stroke="#4a4a4a" stroke-width="1.7"/>
<path d="M1839.5 391.8 C1842.9 391.3 1853.2 387.9 1860.0 388.7 C1866.8 389.5 1868.0 391.1 1880.3 396.5 C1892.6 401.9 1925.0 417.1 1934.0 421.2" stroke="#4a4a4a" stroke-width="1.7"/>
<path d="M1833.3 414.5 C1837.8 414.9 1848.9 414.9 1860.0 416.6 C1871.1 418.4 1887.7 420.3 1900.0 425.0 C1912.3 429.7 1928.3 441.7 1934.0 445.0" stroke="#333" stroke-width="2.3"/>
<path d="M1766.0 643.0 C1771.7 641.8 1786.0 638.2 1800.0 636.0 C1814.0 633.8 1829.5 631.2 1850.0 630.0 C1870.5 628.8 1910.8 628.8 1923.0 628.5" stroke="#2a2a2a" stroke-width="2.6"/>
<path d="M1835.4 485.0 C1835.7 488.4 1836.6 493.2 1837.4 505.7 C1838.2 518.2 1839.0 541.0 1840.0 560.0 C1841.0 579.0 1842.3 600.0 1843.6 620.0 C1844.9 640.0 1846.8 666.7 1848.0 680.0 C1849.2 693.3 1850.0 689.8 1850.7 700.0 C1851.4 710.2 1852.1 734.2 1852.4 741.0" stroke="#2a2a2a" stroke-width="2.0"/>
<path d="M1648.4 869.8 C1651.2 872.9 1658.1 884.4 1665.0 888.4 C1671.9 892.4 1681.5 894.1 1689.8 893.6 C1698.1 893.1 1710.5 886.7 1714.7 885.3" stroke="#4a4a4a" stroke-width="1.7"/>
<path d="M1639.0 888.4 C1638.7 893.9 1636.5 909.8 1637.0 921.5 C1637.5 933.2 1639.3 948.4 1642.2 958.8 C1645.1 969.1 1650.1 976.7 1654.6 983.6 C1659.1 990.5 1664.2 994.5 1669.1 1000.0 C1674.0 1005.5 1679.4 1009.0 1683.8 1016.9 C1688.2 1024.8 1694.0 1034.5 1695.7 1047.5 C1697.4 1060.5 1694.3 1087.1 1694.0 1095.0" stroke="#262626" stroke-width="3.1"/>
<path d="M1671.2 892.5 C1670.8 898.0 1668.1 915.0 1669.1 925.7 C1670.1 936.4 1672.9 947.1 1677.4 956.7 C1681.9 966.4 1690.5 976.4 1696.0 983.6 C1701.5 990.8 1704.0 993.3 1710.5 1000.0 C1717.0 1006.7 1729.7 1014.1 1734.9 1023.7 C1740.1 1033.3 1742.3 1045.9 1741.7 1057.8 C1741.1 1069.7 1733.2 1088.8 1731.5 1095.0" stroke="#4a4a4a" stroke-width="1.7"/>
<path d="M1760.0 853.2 C1758.3 859.1 1752.3 876.3 1749.9 888.4 C1747.5 900.5 1746.1 912.6 1745.7 925.7 C1745.3 938.8 1745.1 957.5 1747.8 967.0 C1750.5 976.5 1756.2 975.0 1762.0 982.8 C1767.8 990.5 1777.5 1002.7 1782.6 1013.5 C1787.7 1024.3 1793.4 1037.3 1792.8 1047.5 C1792.2 1057.7 1781.5 1070.2 1779.2 1074.8" stroke="#4a4a4a" stroke-width="1.7"/>
<path d="M1789.4 795.4 C1790.0 802.2 1795.1 821.0 1792.8 836.3 C1790.5 851.6 1779.8 873.2 1775.8 887.4 C1771.8 901.6 1768.4 910.1 1769.0 921.5 C1769.6 932.9 1773.5 945.3 1779.2 955.5 C1784.9 965.7 1797.9 974.3 1803.0 982.8 C1808.1 991.3 1810.4 997.0 1809.8 1006.6 C1809.2 1016.2 1804.1 1030.5 1799.6 1040.7 C1795.1 1050.9 1785.4 1063.5 1782.6 1068.0" stroke="#4a4a4a" stroke-width="1.7"/>
<path d="M1823.5 815.8 C1823.5 822.0 1825.8 835.7 1823.5 853.3 C1821.2 870.9 1811.0 901.6 1809.8 921.5 C1808.6 941.4 1813.2 961.2 1816.6 972.6 C1820.0 984.0 1828.0 986.8 1830.3 989.6" stroke="#333" stroke-width="2.3"/>
<path d="M1932.5 802.2 C1930.2 807.9 1922.0 822.1 1918.9 836.3 C1915.8 850.5 1912.6 873.2 1913.7 887.4 C1914.8 901.6 1922.0 913.0 1925.7 921.5 C1929.4 930.0 1934.3 935.7 1936.0 938.5" stroke="#4a4a4a" stroke-width="1.7"/>
<path d="M1570.0 1095.0 C1575.0 1090.5 1590.8 1076.3 1600.0 1068.0 C1609.2 1059.7 1618.3 1051.3 1625.0 1045.0 C1631.7 1038.7 1637.5 1032.5 1640.0 1030.0" stroke="#4a4a4a" stroke-width="1.7"/>
<path d="M1620.0 1030.0 C1624.2 1033.3 1638.3 1042.5 1645.0 1050.0 C1651.7 1057.5 1657.2 1067.5 1660.0 1075.0 C1662.8 1082.5 1661.7 1091.7 1662.0 1095.0" stroke="#4a4a4a" stroke-width="1.7"/>
<path d="M1776.4 771.0 C1780.3 774.5 1790.0 785.7 1799.6 792.0 C1809.1 798.3 1822.3 805.6 1833.7 809.0 C1845.1 812.4 1856.5 813.5 1867.8 812.4 C1879.1 811.3 1890.8 807.9 1901.8 802.2 C1912.8 796.5 1928.6 782.0 1934.0 778.0" stroke="#111" stroke-width="3"/>
<path d="M1818.0 812.0 C1823.3 813.5 1839.7 819.7 1850.0 821.0 C1860.3 822.3 1870.0 821.7 1880.0 820.0 C1890.0 818.3 1901.0 815.3 1910.0 811.0 C1919.0 806.7 1930.0 796.8 1934.0 794.0" stroke="#111" stroke-width="11"/>
<path d="M1832.3 415.6 C1828.0 418.5 1814.2 425.8 1806.4 433.2 C1798.6 440.6 1791.2 449.8 1785.7 460.1 C1780.2 470.5 1776.0 482.5 1773.2 495.3 C1770.4 508.1 1769.4 525.3 1769.1 536.7 C1768.8 548.1 1770.8 559.1 1771.2 563.6" stroke="#333" stroke-width="2.3"/>
<path d="M1832.3 415.6 C1829.4 419.6 1820.8 429.6 1814.7 439.4 C1808.7 449.2 1800.2 463.6 1796.0 474.6 C1791.8 485.7 1789.8 495.3 1789.8 505.7 C1789.8 516.0 1793.2 528.4 1796.0 536.7 C1798.8 545.0 1804.7 552.3 1806.4 555.4" stroke="#4a4a4a" stroke-width="1.7"/>
<path d="M1832.3 415.6 C1830.0 420.2 1823.5 431.9 1818.8 443.5 C1814.1 455.1 1807.1 471.9 1804.3 485.0 C1801.5 498.1 1801.2 510.5 1802.2 522.2 C1803.2 533.9 1809.1 549.9 1810.5 555.4" stroke="#333" stroke-width="2.3"/>
<path d="M1832.3 415.6 C1831.1 421.0 1827.2 436.1 1825.0 447.7 C1822.8 459.3 1819.5 472.6 1818.8 485.0 C1818.1 497.4 1819.2 512.2 1820.9 522.2 C1822.6 532.2 1825.8 540.9 1829.2 545.0 C1832.7 549.1 1839.5 546.7 1841.6 547.0" stroke="#333" stroke-width="2.3"/>
<path d="M1832.3 415.6 C1832.5 423.7 1832.1 449.2 1833.3 464.2 C1834.5 479.2 1837.1 492.6 1839.5 505.7 C1841.9 518.8 1846.4 536.8 1847.8 543.0" stroke="#4a4a4a" stroke-width="1.7"/>
<path d="M1832.3 415.6 C1833.5 420.2 1836.2 433.7 1839.5 443.5 C1842.8 453.3 1848.4 463.5 1852.0 474.6 C1855.6 485.7 1859.5 499.6 1861.0 510.0 C1862.5 520.4 1861.0 532.2 1861.0 536.7" stroke="#333" stroke-width="2.3"/>
<path d="M1832.3 415.6 C1836.5 418.3 1850.8 422.6 1857.7 431.8 C1864.7 441.0 1870.2 455.7 1874.0 471.0 C1877.8 486.3 1879.6 511.6 1880.7 523.6 C1881.8 535.6 1880.7 540.0 1880.7 543.3" stroke="#333" stroke-width="2.3"/>
<path d="M1832.3 415.6 C1837.6 417.2 1854.6 417.0 1864.3 425.2 C1874.0 433.4 1884.5 451.5 1890.5 464.6 C1896.5 477.7 1897.5 492.5 1900.3 504.0 C1903.0 515.5 1907.5 528.6 1907.0 533.4 C1906.5 538.2 1898.7 533.1 1897.0 533.0" stroke="#4a4a4a" stroke-width="1.7"/>
<path d="M1832.3 415.6 C1839.2 416.7 1861.6 415.5 1874.0 422.0 C1886.4 428.5 1898.7 443.9 1906.9 454.8 C1915.1 465.7 1919.5 473.9 1923.3 487.5 C1927.1 501.1 1928.7 528.5 1929.8 536.7" stroke="#333" stroke-width="2.3"/>
<path d="M1832.3 415.6 C1840.4 416.1 1863.9 413.3 1880.7 418.7 C1897.5 424.1 1924.3 443.3 1933.0 448.2" stroke="#4a4a4a" stroke-width="1.7"/>
<path d="M1832.3 415.6 C1838.2 419.0 1857.5 425.3 1868.0 436.0 C1878.5 446.7 1887.7 465.2 1895.0 480.0 C1902.3 494.8 1908.7 514.2 1912.0 525.0 C1915.3 535.8 1914.5 541.7 1915.0 545.0" stroke="#333" stroke-width="2.3"/>
<path d="M1832.3 415.6 C1835.2 419.7 1844.4 427.6 1850.0 440.0 C1855.6 452.4 1862.3 475.0 1866.0 490.0 C1869.7 505.0 1871.7 520.8 1872.0 530.0 C1872.3 539.2 1868.7 542.5 1868.0 545.0" stroke="#4a4a4a" stroke-width="1.7"/>
<path d="M1832.3 415.6 C1841.1 418.0 1871.2 420.9 1885.0 430.0 C1898.8 439.1 1907.2 456.7 1915.0 470.0 C1922.8 483.3 1929.2 503.3 1932.0 510.0" stroke="#4a4a4a" stroke-width="1.7"/>
<path d="M1832.3 415.6 C1834.6 422.2 1842.7 440.9 1846.0 455.0 C1849.3 469.1 1850.3 486.7 1852.0 500.0 C1853.7 513.3 1856.3 527.0 1856.0 535.0 C1855.7 543.0 1852.3 546.0 1850.0 548.0 C1847.7 550.0 1843.3 547.2 1842.0 547.0" stroke="#333" stroke-width="2.3"/>
<path d="M1775.0 485.0 C1773.8 490.8 1769.2 507.5 1768.0 520.0 C1766.8 532.5 1768.0 553.3 1768.0 560.0" stroke="#777" stroke-width="1.4"/>
</g>
<g fill="none" stroke="#333" stroke-linecap="round">
<path d="M849 1047 L852 1060" stroke-width="2"/>
<path d="M962 1048 L976 1093" stroke="#a8c4d8" stroke-width="1" />
<path d="M1087.6 1068.0 A12 12 0 0 1 1093.9 1050.7" stroke="#3a3a3a" stroke-width="2.4" opacity="0.90"/>
<path d="M1091.9 1065.5 A7 7 0 0 1 1095.6 1055.4" stroke="#3a3a3a" stroke-width="2.1" opacity="0.75"/>
<path d="M1056.2 1085.6 A14 14 0 0 1 1074.8 1074.8" stroke="#3a3a3a" stroke-width="2.4" opacity="0.90"/>
<path d="M1062.1 1086.6 A8 8 0 0 1 1072.7 1080.5" stroke="#3a3a3a" stroke-width="2.1" opacity="0.75"/>
<path d="M1122.6 1089.6 A10 10 0 0 1 1133.7 1083.2" stroke="#3a3a3a" stroke-width="2.4" opacity="0.90"/>
<path d="M1167.5 1051.9 A9 9 0 0 1 1180.5 1047.2" stroke="#3a3a3a" stroke-width="2.4" opacity="0.90"/>
<path d="M1175.2 1073.7 A13 13 0 0 1 1194.5 1064.7" stroke="#3a3a3a" stroke-width="2.4" opacity="0.90"/>
<path d="M1180.1 1074.6 A8 8 0 0 1 1192.0 1069.1" stroke="#3a3a3a" stroke-width="2.1" opacity="0.75"/>
<path d="M1185.0 1075.5 A3 3 0 0 1 1189.5 1073.4" stroke="#3a3a3a" stroke-width="1.8" opacity="0.60"/>
<path d="M1207.9 1076.9 A15 15 0 0 1 1233.5 1072.4" stroke="#3a3a3a" stroke-width="2.4" opacity="0.90"/>
<path d="M1212.6 1078.6 A10 10 0 0 1 1229.7 1075.6" stroke="#3a3a3a" stroke-width="2.1" opacity="0.75"/>
<path d="M1217.3 1080.3 A5 5 0 0 1 1225.8 1078.8" stroke="#3a3a3a" stroke-width="1.8" opacity="0.60"/>
<path d="M1288.7 1053.9 A12 12 0 0 1 1309.2 1050.3" stroke="#3a3a3a" stroke-width="2.4" opacity="0.90"/>
<path d="M1293.4 1055.6 A7 7 0 0 1 1305.4 1053.5" stroke="#3a3a3a" stroke-width="2.1" opacity="0.75"/>
<path d="M1280.7 1071.5 A13 13 0 0 1 1302.0 1069.6" stroke="#3a3a3a" stroke-width="2.4" opacity="0.90"/>
<path d="M1284.2 1073.5 A9 9 0 0 1 1298.9 1072.2" stroke="#3a3a3a" stroke-width="2.1" opacity="0.75"/>
<path d="M1324.7 1061.9 A12 12 0 0 1 1346.4 1060.0" stroke="#3a3a3a" stroke-width="2.4" opacity="0.90"/>
<path d="M1329.4 1063.6 A7 7 0 0 1 1342.1 1062.5" stroke="#3a3a3a" stroke-width="2.1" opacity="0.75"/>
<path d="M1355.8 1083.6 A13 13 0 0 1 1379.3 1081.5" stroke="#3a3a3a" stroke-width="2.4" opacity="0.90"/>
<path d="M1360.5 1085.3 A8 8 0 0 1 1374.9 1084.0" stroke="#3a3a3a" stroke-width="2.1" opacity="0.75"/>
<path d="M1365.2 1087.0 A3 3 0 0 1 1370.6 1086.5" stroke="#3a3a3a" stroke-width="1.8" opacity="0.60"/>
<path d="M1260.5 1094.3 A8 8 0 0 1 1274.1 1091.9" stroke="#3a3a3a" stroke-width="2.4" opacity="0.90"/>
<path d="M1310.5 1094.3 A8 8 0 0 1 1324.1 1091.9" stroke="#3a3a3a" stroke-width="2.4" opacity="0.90"/>
<path d="M1220.5 1094.3 A8 8 0 0 1 1234.1 1091.9" stroke="#3a3a3a" stroke-width="2.4" opacity="0.90"/>
<path d="M1138 1047 L1140 1055" stroke="#555" stroke-width="1.6"/>
<path d="M1145 1047 L1147 1055" stroke="#555" stroke-width="1.6"/>
<path d="M1152 1047 L1154 1055" stroke="#555" stroke-width="1.6"/>
<defs><linearGradient id="dsh" x1="0" y1="0" x2="0" y2="1"><stop offset="0" stop-color="#000" stop-opacity="0.12"/><stop offset="1" stop-color="#000" stop-opacity="0"/></linearGradient></defs>
</g></svg></svg>
<svg width="1999" height="1159" style="z-index:5">
<!-- logo -->
<path d="M38.5 8.2 C34 9.6 30 11.4 27.2 9.8 C24.6 8.2 25.8 4.9 29.6 3.7 C34.5 2.1 41.5 1.6 44.6 4.6 C47.6 7.8 46.2 12.6 40.5 15.2 L34.6 17.6 L37.6 22" fill="none" stroke="#b4b4b4" stroke-width="3.4" stroke-linecap="round" stroke-linejoin="round"/>
<!-- left header chevrons -->
<g fill="none" stroke="#8a8a8a" stroke-width="1.4">
<path d="M8.5 38.2 L2.6 44.2 L8.5 50.1 M15.6 38.2 L9.8 44.2 L15.6 50.1"/>
<path d="M107.6 38.2 L101.4 44.2 L107.6 50.1 M114.4 38.2 L108.4 44.2 L114.4 50.1"/>
<path d="M148.8 38.6 L155 44.2 L148.8 50.1"/>
</g>
<path d="M84.2 35V53 M87.4 35V53 M90.6 35V53" stroke="#6a6a6a" stroke-width="1.1"/>
<!-- tool panel header -->
<path d="M11 71.8H21.3 M11 76.6H21.3 M11 81.4H21.3" stroke="#9a9a9a" stroke-width="1.2"/>
<path d="M46.5 92 L62.5 76.5" stroke="#bdbdbd" stroke-width="4" stroke-linecap="round"/>
<path d="M43.5 94.8 L45.2 89.8 L48.4 93 Z" fill="#bdbdbd"/>
<svg x="0" y="60" width="89.5" height="40" style="overflow:hidden"><text x="75.5" y="29.2" font-size="15" font-weight="bold" fill="#d2d2d2" letter-spacing="-1.2">To</text></svg>
<!-- separators in tool panel -->
<path d="M6 285.5H91 M6 471.7H91" stroke="#5c5c5c" stroke-width="1.2"/>
<!-- selected tiles -->
<rect x="4" y="289" width="41.5" height="42" fill="#4d5159"/>
<rect x="55" y="296" width="28" height="27" fill="#3d3c3c"/>
<g fill="#7a6c68" opacity="0.9"><circle cx="68" cy="309" r="7"/><circle cx="64" cy="306" r="3" fill="#8a7f78"/><circle cx="72" cy="312" r="3" fill="#7c6570"/></g>
<rect x="54" y="429" width="31" height="31" fill="#5a5061"/>
<!-- tool icons -->
<g fill="none" stroke="#6b6b6b" stroke-width="1.6" stroke-linecap="round" stroke-linejoin="round">
<circle cx="22" cy="120" r="8.7"/><path d="M28.4 126.4 L36 134"/>
<!-- cube cursor -->
<path d="M11.5 160 L20 155 L29 160 L29 170 L20 175 L11.5 170 Z M11.5 160 L20 165 L29 160 M20 165 V175"/>
<!-- lasso -->
<path d="M17 220 C9 214 11 202 22 199.5 C32 197.5 39 204 35 212 C32 218 24 220 19 219 C15 218 15 223 19 223 C22 223 22 226 11 227"/>
<!-- eyedropper -->
<path d="M12 271 L14 263 L28 249 L32 253 L18 267 Z M26 251 L30 247 M31 246 L34 249 M24 249 L34 259"/>
<!-- pen nib selected -->
<path d="M12 328 L16 313 L30 303 L36 309 L26 323 Z M12 328 L23 316"/>




<!-- gradient box -->
<rect x="57.5" y="481.5" width="23.5" height="24" rx="3"/>
<!-- line -->
<path d="M11 553 L37 527"/>
<!-- frame -->
<rect x="57.5" y="527" width="23.5" height="26" rx="3"/><path d="M57.5 535.5H81 M70 541H81 M70 541 L68 553"/>
<!-- triangle ruler -->
<path d="M11 597 L11 573 L37 573 Z"/><path d="M16 586 L16 578 L24 578 Z"/>
<!-- speech -->
<path d="M16 640 C8 637 9 625 20 622.5 C31 620.5 38 626 37 631 C36 637 27 639 20 638 L13 643 Z"/>
</g>
<g fill="#6b6b6b">
<path d="M55 126 C52 122 53 120 56 122 L59 125 L58 110 C58 107.5 61 107.5 61 110 L62 119 L62 107 C62 104.5 65.5 104.5 65.5 107 L66 119 L67 108 C67 105.5 70.5 105.5 70.5 108 L70.5 120 L72 112 C72.5 109.5 75.5 110 75.3 112.5 L74 127 C73 133 70 136 64 136 C59 136 57 131 55 126 Z"/>
<path d="M69 153 L74 159 L70.8 159 L70.8 166.2 L78 166.2 L78 163 L84 168 L78 173 L78 169.8 L70.8 169.8 L70.8 177 L74 177 L69 183 L64 177 L67.2 177 L67.2 169.8 L60 169.8 L60 173 L54 168 L60 163 L60 166.2 L67.2 166.2 L67.2 159 L64 159 Z"/>
<path d="M23 172 L23 183 L26 180 L29 185 L31 184 L28.5 179 L33 179 Z"/>
<path d="M72 199 L73.5 207 L80 203 L75.5 209.5 L83 212 L75.5 214 L79 220 L73 216 L71 223 L69.5 215.5 L63 218 L67 212.5 L60 210 L67 208 L64 202 L70 206 Z"/>
<path d="M58.5 224.5 L69 214 L70 215 L59.5 225.5 Z"/>



<g opacity="0.9"><circle cx="57" cy="341" r="1"/><circle cx="61" cy="343" r="1"/><circle cx="65" cy="345" r="1"/><circle cx="57" cy="347" r="1"/><circle cx="61" cy="350" r="1"/><circle cx="65" cy="349" r="1"/><circle cx="57" cy="354" r="1"/></g>

<!-- A -->
<path d="M58 598 L67 573 L71 573 L80 598 L76 598 L73.5 591 L64.5 591 L62 598 Z M65.8 587.5 L72.3 587.5 L69 578 Z" fill-rule="evenodd"/>
<!-- pointer -->
<path d="M58 617 L64 617 L64 623 L58 623 Z M61 623 V643 M64 620 H80"/><path d="M64 623 L80 633 L72 635 L70 643 Z"/>
</g>
<g fill="none" stroke="#6b6b6b" stroke-width="1.6"><path d="M58 617H64V623H58Z M61 623V643 M64 620H80"/></g>
<g fill="#6b6b6b">
<!-- ink bottle -->
<g transform="rotate(45 24 356)"><rect x="17" y="340" width="14" height="30" rx="3"/><rect x="20" y="352" width="8" height="9" fill="#4c4c4c"/></g>
<!-- airbrush -->
<path d="M63.5 368 V361 C63.5 353 82.5 353 82.5 361 V368 Z"/><rect x="65.5" y="361" width="15" height="5" fill="#4c4c4c"/><rect x="71" y="345" width="4" height="7" rx="1.5"/>
<g><circle cx="56.5" cy="341" r="1.1"/><circle cx="61" cy="342.5" r="1.1"/><circle cx="65" cy="344" r="1.1"/><circle cx="57" cy="346" r="1.1"/><circle cx="61" cy="348" r="1.1"/><circle cx="65.5" cy="349" r="1.1"/><circle cx="57" cy="351" r="1.1"/><circle cx="61" cy="353" r="1.1"/><circle cx="57" cy="355" r="1.1"/><circle cx="68.5" cy="347" r="1.1"/></g>
<!-- flower -->
<g transform="translate(25.4 395.6)"><circle r="4.5"/><circle cx="0" cy="-6.5" r="3.6"/><circle cx="6.2" cy="-2" r="3.6"/><circle cx="3.8" cy="5.3" r="3.6"/><circle cx="-3.8" cy="5.3" r="3.6"/><circle cx="-6.2" cy="-2" r="3.6"/></g>
<circle cx="25.4" cy="395.6" r="2.6" fill="#4c4c4c"/>
<path d="M24 401 L21 414 L22 414 L25.5 401 Z"/><path d="M21.5 412 C17 410 13 408 12.5 405 C17 405 21 408 21.5 412 Z"/>
<!-- eraser -->
<path d="M69.5 386.5 L82 399 L72 409 L59.5 396.5 Z"/>
<path d="M58 398 L70.5 410.5 L67 414 C66 415 64.5 415 63.5 414 L55 405.5 C54 404.5 54 403 55 402 Z" fill="none" stroke="#6b6b6b" stroke-width="1.6"/>
<path d="M67 413 H81" stroke="#6b6b6b" stroke-width="1.6"/>
<!-- purple tile eraser -->
<path d="M70 433 L83 446 L73 456 L60 443 Z" fill="#4e4e4e"/>
<path d="M58.5 445 L71 457.5 L68 460 C67 461 65.5 461 64.5 460 L56 451.5 C55 450.5 55 449 56 448 Z" fill="none" stroke="#4e4e4e" stroke-width="1.6"/>
<path d="M68 459 H82" stroke="#4e4e4e" stroke-width="1.6"/>
<!-- fill bucket -->
<path d="M25 483.5 L37.5 495.5 L25 507.5 L12.5 495.5 Z" fill="none" stroke="#6b6b6b" stroke-width="1.8" stroke-linejoin="round"/>
<path d="M14 494 C19 491 31 491 36 494 L37.5 495.5 L25 507.5 L12.5 495.5 Z"/>
<path d="M12.5 495.5 C9.5 499 10 503.5 12.5 504 C15 503.5 15 499 12.5 495.5 Z"/>
</g>
<!-- grid -->
<g fill="none" stroke="#6b6b6b" stroke-width="1.5">
<rect x="11.5" y="431.5" width="26.5" height="26.5" rx="5"/>
<path d="M11.5 440.5H25 M11.5 449H25 M20 431.5V458 M25 440.5 C30 442 33 444 38 444 M25 449 C30 448 33 446 38 446 M25 431.5 L31 440 M25 458 L31 450"/>
</g>


<defs><linearGradient id="gb" x1="0" y1="0" x2="1" y2="1"><stop offset="0" stop-color="#3e3e3e"/><stop offset="1" stop-color="#6e6e6e"/></linearGradient>
<linearGradient id="gb2" x1="0" y1="0" x2="1" y2="1"><stop offset="0" stop-color="#444"/><stop offset="1" stop-color="#bbb"/></linearGradient>
<pattern id="chk" x="4" y="754" width="18" height="16" patternUnits="userSpaceOnUse"><rect width="18" height="16" fill="#4e4e4e"/><rect width="9" height="8" fill="#6a6a6a"/><rect x="9" y="8" width="9" height="8" fill="#6a6a6a"/></pattern>
</defs>
<rect x="59" y="483" width="20" height="20.5" rx="2" fill="url(#gb)"/>
<!-- color swatches -->
<rect x="42" y="694.5" width="51" height="52" rx="5" fill="#6f6f75" stroke="#454545" stroke-width="2.2"/>
<rect x="3" y="658" width="51" height="53" rx="5" fill="#5a4a43" stroke="#5a6a7a" stroke-width="2.5"/>
<rect x="3" y="753" width="90" height="31" rx="5" fill="url(#chk)" stroke="#464646" stroke-width="1.5"/>
</svg>

<svg width="1999" height="1159" style="z-index:5">
<defs>
<g id="nib">
<path d="M21 10.3 L24.8 5.5 L34.5 15.5 L29 19.7 Z" fill="#b5b5b5" stroke="#b5b5b5" stroke-width="1.2" stroke-linejoin="round"/>
<path d="M21 11 L14.5 15.5 C13 16.5 12.5 17.5 12 19 L7 33 L19 28.5" fill="none" stroke="#b5b5b5" stroke-width="1.6" stroke-linejoin="round"/>
<path d="M20.5 19.5 L9.5 30.5" stroke="#b5b5b5" stroke-width="2" stroke-linecap="round"/>
</g>
</defs>
<!-- subtool column icons -->
<g transform="translate(110 70)">
<use href="#nib"/>
<path d="M34.5 22.5 H25 C23.5 22.5 23 23.5 23 25 V32 C23 33.5 23.5 34.5 25 34.5 H34.5 M23 28.5 H34.5" fill="none" stroke="#b5b5b5" stroke-width="1.6"/>
<circle cx="34.5" cy="22.5" r="1.7" fill="#b5b5b5"/><circle cx="34.5" cy="28.5" r="1.7" fill="#b5b5b5"/><circle cx="34.5" cy="34.5" r="1.7" fill="#b5b5b5"/>
</g>
<g transform="translate(110 131)">
<use href="#nib"/>
<circle cx="28.5" cy="28.5" r="4.2" fill="none" stroke="#b5b5b5" stroke-width="2.2"/>
<path d="M28.5 21.5V35.5 M21.5 28.5H35.5 M23.5 23.5L33.5 33.5 M33.5 23.5L23.5 33.5" stroke="#b5b5b5" stroke-width="2.2" stroke-dasharray="2.2 9.6"/>
</g>
<circle cx="130.5" cy="212.5" r="12" fill="none" stroke="#b5b5b5" stroke-width="2.2"/>
<path d="M127.5 209.5 L136.5 209.5 L127.5 218.5 Z" fill="#b5b5b5"/>
<path d="M130 212 L143 224.5" stroke="#b5b5b5" stroke-width="3.2"/>
<g transform="translate(110 253)">
<use href="#nib"/>
<circle cx="28.7" cy="29" r="7.6" fill="#3a3a3a" stroke="#b5b5b5" stroke-width="1.7"/><circle cx="28.7" cy="29" r="3.8" fill="none" stroke="#b5b5b5" stroke-width="1.5"/><circle cx="28.7" cy="29" r="1" fill="#b5b5b5"/>
</g>
<defs><linearGradient id="sq" x1="0" y1="0" x2="1" y2="1"><stop offset="0" stop-color="#444"/><stop offset="1" stop-color="#c8c8c8"/></linearGradient></defs>
<circle cx="130" cy="335" r="13" fill="none" stroke="#b5b5b5" stroke-width="2"/>
<rect x="123" y="328" width="14" height="14" rx="1.5" fill="url(#sq)" stroke="#b5b5b5" stroke-width="1.6"/>
<!-- film -->
<rect x="118.5" y="374.5" width="23.5" height="24" rx="3" fill="none" stroke="#b5b5b5" stroke-width="1.8"/>
<rect x="123.5" y="377" width="13.5" height="6" fill="#8e8e8e"/><rect x="123.5" y="389.5" width="13.5" height="6" fill="#8e8e8e"/>
<path d="M123.5 375V398 M137 375V398 M118.5 379.5H123.5 M118.5 384H123.5 M118.5 388.5H123.5 M118.5 393H123.5 M137 379.5H142 M137 384H142 M137 388.5H142 M137 393H142" stroke="#b5b5b5" stroke-width="1.3"/>
<!-- layer xo -->
<g fill="none" stroke="#b5b5b5" stroke-width="1.6">
<path d="M119 441 L129 435 L139 441 L129 447 Z"/><path d="M119 446 L129 452 M119 451 L129 457"/>
<circle cx="135" cy="452" r="2.4"/><path d="M133 457 L137 461 M137 457 L133 461"/><rect x="139.5" y="456.5" width="4.5" height="4.5"/>
</g>
<circle cx="142" cy="452" r="2.6" fill="#b5b5b5"/>
<!-- folder cube -->
<path d="M117.5 500 V520 C117.5 521 118 521.5 119 521.5 H142.5 C143.5 521.5 144 521 144 520 V502.5 H131 L128.5 500 Z" fill="none" stroke="#b5b5b5" stroke-width="1.7"/>
<path d="M124 506 L130.5 503 L137 506 V514 L130.5 517.5 L124 514 Z M124 506 L130.5 509.5 L137 506 M130.5 509.5 V517.5" fill="none" stroke="#b5b5b5" stroke-width="1.4"/>
<!-- checker -->
<rect x="118.5" y="558.5" width="24" height="24" rx="3.5" fill="#b8b8b8"/>
<rect x="120.5" y="560.5" width="5.5" height="5.5" fill="#3e3e3e"/>
<rect x="135" y="560.5" width="5.5" height="5.5" fill="#8a8a8a"/>
<rect x="120.5" y="568" width="5.5" height="5.5" fill="#727272"/>
<rect x="135" y="568" width="5.5" height="5.5" fill="#727272"/>
<rect x="127.7" y="575.5" width="5.5" height="5.5" fill="#8a8a8a"/>
<rect x="135" y="575.5" width="5.5" height="5.5" fill="#3e3e3e"/>
<rect x="128" y="568.2" width="5" height="5" fill="#dcdcdc" stroke="#3a3a3a" stroke-width="1.4"/>
<!-- layers stack -->
<g fill="none" stroke="#b5b5b5" stroke-width="1.8" stroke-linejoin="round">
<path d="M118.5 625 L130 618.5 L141.5 625 L130 631.5 Z"/>
<path d="M118.5 630 L130 636.5 L141.5 630 M118.5 635 L130 641.5 L141.5 635"/>
</g>
<!-- bottom bar -->
<path d="M173 1109.5 L179 1103.5 L185 1109.5 M173 1145 L179 1151 L185 1145 M173 1151.5 L179 1157.5 L185 1151.5" fill="none" stroke="#707070" stroke-width="1.6"/>
<rect x="215.5" y="1116.5" width="22.5" height="23.5" rx="3" fill="none" stroke="#b0b0b0" stroke-width="1.6"/>
<path d="M221 1117V1139" stroke="#b0b0b0" stroke-width="1.4"/>
<path d="M229 1122.5 L231.5 1125 L229 1127.5 L226.5 1125 Z M229 1128.5 L231.5 1131 L229 1133.5 L226.5 1131 Z" fill="#b0b0b0"/>
<rect x="280.5" y="1116.5" width="24.5" height="23.5" rx="3" fill="none" stroke="#b0b0b0" stroke-width="1.6"/>
<path d="M281 1128H286 M299.5 1128H305 M292.8 1117V1122 M292.8 1134V1139" stroke="#b0b0b0" stroke-width="1.4"/>
<path d="M286.5 1125 H290 L291.5 1123 H294.5 L296 1125 H299 V1133 H286.5 Z" fill="none" stroke="#b0b0b0" stroke-width="1.4"/>
<circle cx="292.8" cy="1129" r="1.6" fill="#b0b0b0"/>
<!-- right panel -->
<path d="M1950 39 L1943.5 44.8 L1950 50.5" fill="none" stroke="#777" stroke-width="1.4"/>
<path d="M1984 39.5 L1990 45 L1984 50.5 M1991 39.5 L1997 45 L1991 50.5" fill="none" stroke="#777" stroke-width="1.4"/>
<g fill="none" stroke="#a8a8a8" stroke-width="1.6">
<rect x="1957" y="85.5" width="23.5" height="16" rx="2"/>

<rect x="1957" y="130.5" width="23.5" height="23.5" rx="3"/>
<rect x="1955" y="186.5" width="21" height="19" rx="2.5"/>
</g>
<path d="M1956.5 83 L1980 77.5 L1980.5 80.5 L1957 86 Z" fill="#a8a8a8" stroke="#a8a8a8" stroke-width="1.2"/><path d="M1959 86.5 L1961 89 M1963 86.5 L1965 89 M1967 86.5 L1969 89 M1971 86.5 L1973 89 M1975 86.5 L1977 89" stroke="#a8a8a8" stroke-width="1.4"/><path d="M1965.5 91 L1971.5 95 L1965.5 99 Z" fill="#a8a8a8"/>
<rect x="1960.5" y="131" width="16.5" height="19" fill="none" stroke="#a8a8a8" stroke-width="1.4"/><path d="M1961.5 149.5 V144 L1964.5 141.5 L1967 143.5 L1971 139.5 L1974 142.5 L1976 141 V149.5 Z" fill="#7e7e7e"/>
<rect x="1959.5" y="182.5" width="22" height="19" rx="2.5" fill="#6e6e6e" stroke="#a8a8a8" stroke-width="1.6"/>

<circle cx="1978" cy="263" r="29" fill="#2d2d2d"/>
<path d="M1966.5 275 L1968 269.5 L1984.5 253 L1988 256.5 L1971.5 273 Z" fill="#8c8c8c"/>
<rect x="1993" y="395" width="6" height="124" rx="3" fill="#5e5e5e"/>
<circle cx="2000.5" cy="851" r="37" fill="#484848" stroke="#cfcfcf" stroke-width="3"/>
<path d="M1985 841.5 L1975.5 851.5 L1985 861.5" fill="none" stroke="#cfcfcf" stroke-width="2.8" stroke-linecap="round" stroke-linejoin="round"/>
<rect x="1993" y="828.5" width="20" height="46" rx="3.5" fill="#6a6a6a" stroke="#d4d4d4" stroke-width="2.6"/>
<!-- tab chevron -->
<path d="M1907 86 L1915.3 94.5 L1923.5 86" fill="none" stroke="#cfcfcf" stroke-width="1.8"/>
</svg>

<svg width="1999" height="1159" style="z-index:5">
<path d="M389.5 31V76 M621 31V76 M1023.5 31V76 M1226 31V76 M1427 31V76" stroke="#474747" stroke-width="1.2"/>
<path d="M163.5 30V77" stroke="#3e3e3e" stroke-width="2"/>
<g fill="none" stroke="#5b5b5b" stroke-width="2">
<path d="M185.5 44.5H205.5 M185.5 52.5H205.5 M185.5 60.5H205.5" stroke="#6a6a6a" stroke-width="2.4"/>
<rect x="246" y="45" width="20" height="20" rx="2"/>
<path d="M296 49 L300.5 54 L305 49" stroke="#6e6e6e"/>
<rect x="339" y="45" width="25" height="21" rx="2"/>
<path d="M346 58 C343 52 352 47 357 52 C361 57 351 60 349 55 C348 52 354 51 355 54"/>
<path d="M419 41 H432 L438 47 V64 H419 Z"/>
<path d="M479 48 H490 L493 51 H504 V65 H479 Z"/>
<path d="M541 60 V66 H568 V60 M554.5 43 V58 M549 53 L554.5 58 L560 53 M545 52 L541 60 M564 52 L568 60"/>
<path d="M591 49 L600 57 L609 49" stroke="#6e6e6e"/>
<path d="M652 47 H662 C670 47 670 62 662 62 H652 M657 42 L651 47 L657 52"/>
<path d="M732 47 H722 C714 47 714 62 722 62 H734 M727 42 L733 47 L727 52"/>
<circle cx="796" cy="53" r="10" stroke-dasharray="3 2.5"/>
<rect x="848" y="42" width="21" height="21" rx="3" stroke-dasharray="3 2.5"/>
<rect x="975" y="45" width="20" height="18" stroke-dasharray="0"/>
<path d="M985 40V45 M985 63V67"/>
<path d="M1049 41 L1072 66 M1049 41 H1072 V66" stroke-dasharray="3 2.5"/>
<rect x="1115" y="42" width="21" height="22" stroke-dasharray="3 2.5"/>
<rect x="1176" y="42" width="23" height="22" rx="4"/>
<path d="M1253 48 V65 H1270 M1253 65 L1273 45" stroke="#5a5d63"/>
<path d="M1314 56 C1314 66 1332 66 1336 56 M1323 60 L1340 43" stroke="#5a5d63"/>
<path d="M1379 65 H1405 M1384 62 L1402 45"/>
<circle cx="1464" cy="52" r="11"/>
<path d="M1460 49 C1460 43 1469 43 1469 49 C1469 52 1464 53 1464 56"/>
</g>
<g fill="#595959">
<path d="M908 52 L921 41 L935 53 L921 66 Z"/>
<path d="M1115 64 L1136 43 V64 Z"/>
<path d="M479 65 L484 55 H508 L503 65 Z"/>
</g>
</svg>

<div class="a" style="left:465.5px;top:884.5px;width:903.5px;height:162px;background:#393939;box-shadow:3px 6px 10px -2px rgba(0,0,0,0.3);z-index:10">
<div class="a" style="left:2.5px;top:36.3px;width:897.5px;height:123.5px;background:#4f4f4f"></div>
<div class="a" style="left:0;top:8.5px;width:903.5px;text-align:center;color:#c9c9c9;font-size:18px;font-weight:bold;letter-spacing:-0.1px">Gaussian blur</div>
<svg width="903" height="162"><path d="M881.5 10 L895 23.5 M895 10 L881.5 23.5" stroke="#cfcfcf" stroke-width="1.6"/></svg>
<div class="a" style="left:12px;top:52px;color:#d6d6d6;font-size:16.5px;letter-spacing:-0.55px">Strength:</div>
<div class="a" style="left:595.8px;top:45.3px;width:119.5px;height:38.3px;border:2px solid #c4c4c4;border-radius:2.5px;background:linear-gradient(90deg,#555 0%,#5c5c5c 60%,#6a6a6a 100%)"></div>
<div class="a" style="left:679.5px;top:52.5px;width:32px;height:24px;background:#4a6597"></div>
<div class="a" style="left:680px;top:54px;color:#dde3ee;font-size:17px;letter-spacing:-0.6px">6.00</div>
<svg width="903" height="162"><path d="M736.5 61 L743 55 L749.5 61 M736.5 69 L743 75 L749.5 69" fill="none" stroke="#c0c0c0" stroke-width="1.5"/></svg>
<div class="a" style="left:20.5px;top:94.8px;width:733px;height:13.7px;background:#676767;border:1.2px solid #8a8a8a;border-radius:1px"></div>
<svg width="903" height="162"><path d="M29 115.5 L35.5 109 L42 115.5" fill="none" stroke="#a8a8a8" stroke-width="1.5"/></svg>
<div class="a" style="left:771.5px;top:45.3px;width:120.5px;height:31px;background:#6276a2;border:1px solid #6b7fa8;border-radius:2px;color:#f0f2f6;font-size:17px;text-align:center;line-height:29px;letter-spacing:-0.3px">OK</div>
<div class="a" style="left:771.5px;top:85.5px;width:120.5px;height:31px;background:#5d5d5d;border:1.3px solid #777;border-radius:2px;color:#dedede;font-size:16px;text-align:center;line-height:28px;letter-spacing:-0.5px">Cancel</div>
<div class="a" style="left:771.5px;top:125.5px;width:24px;height:24.5px;background:#5a5a5a;border:1.3px solid #6e6e6e;border-radius:2px"></div>
<svg width="903" height="162"><path d="M775.5 137.5 L781 144.5 L791 129.5" fill="none" stroke="#eeeeee" stroke-width="2.6" stroke-linecap="round" stroke-linejoin="round"/></svg>
<div class="a" style="left:800px;top:129.5px;color:#dcdcdc;font-size:16px;letter-spacing:-0.5px">Preview</div>
</div>

</body></html>
